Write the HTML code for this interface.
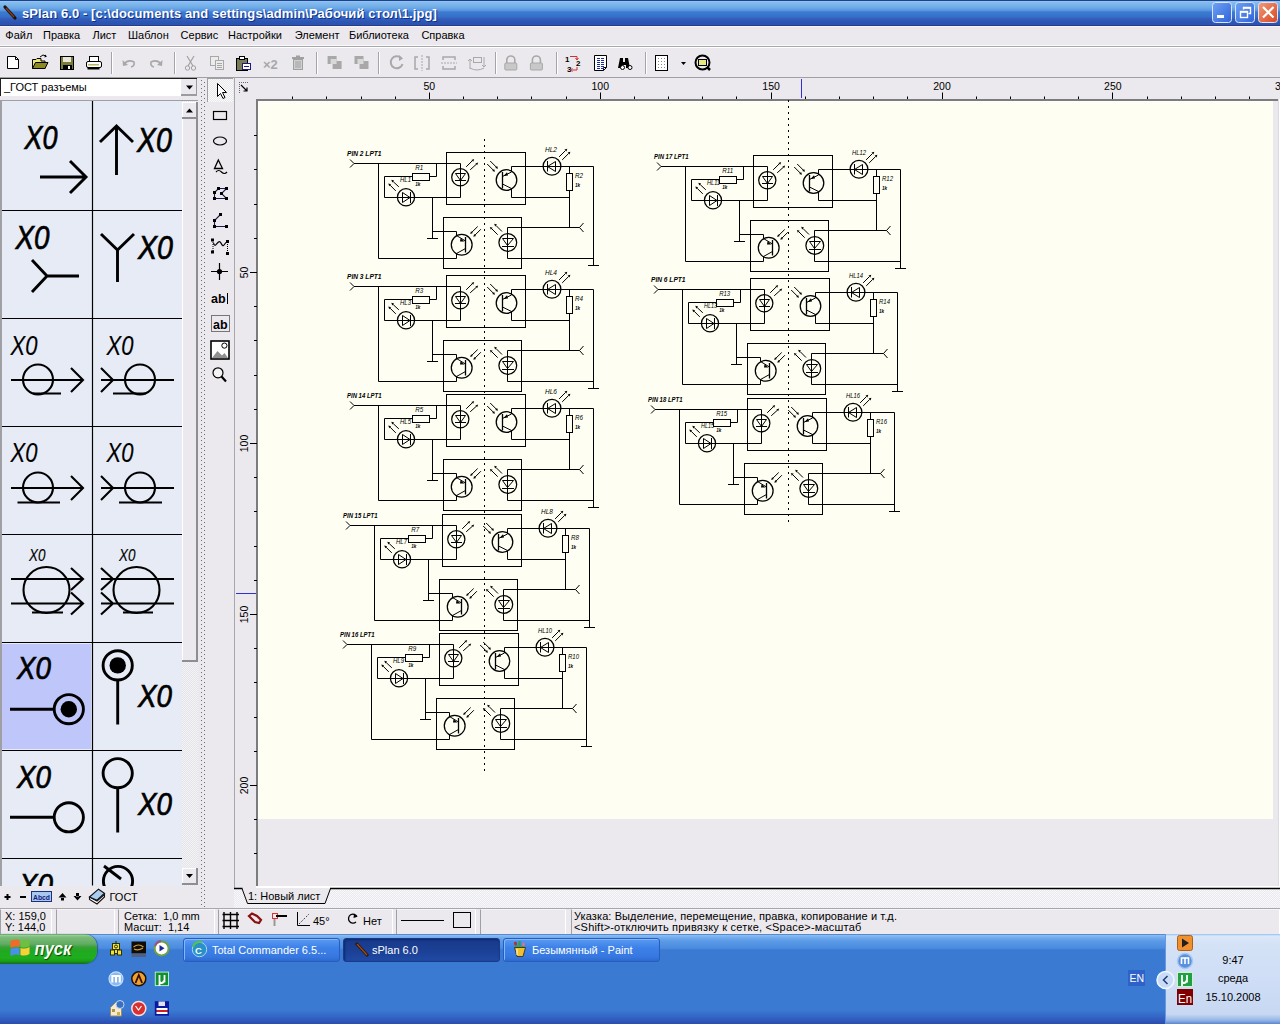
<!DOCTYPE html><html><head><meta charset="utf-8"><title>sPlan</title><style>
*{box-sizing:border-box}
html,body{margin:0;padding:0}
body{width:1280px;height:1024px;overflow:hidden;position:relative;background:#ebe9ed;font-family:"Liberation Sans",sans-serif;font-size:11px;color:#000}
.a{position:absolute}
.t{position:absolute;white-space:nowrap;line-height:1}
svg{position:absolute;overflow:visible}
</style></head><body><div class="a" style="left:0;top:0;width:1280px;height:26px;background:linear-gradient(180deg,#1a448a 0px,#1a448a 1px,#a0c8ff 1px,#88bcf0 2px,#7ab4e8 5px,#6aa8e8 8px,#5590e0 11px,#3a78cc 12px,#3a7ad0 13px,#3470c8 17px,#3a60c0 18px,#2c58b4 21px,#2a52b0 25px,#283a88 25px,#283a88 26px)"></div><svg style="left:0;top:0" width="26" height="26"><line x1="5" y1="7" x2="15" y2="18" stroke="#1b1208" stroke-width="3.2" stroke-linecap="round"/><line x1="6" y1="8" x2="14" y2="17" stroke="#8a3c18" stroke-width="1.4"/></svg><div class="t" style="left:22px;top:6.5px;font-size:13px;font-weight:bold;color:#fff;letter-spacing:0.1px;text-shadow:1px 1px 0 #0f2f8a">sPlan 6.0 - [c:\documents and settings\admin\Рабочий стол\1.jpg]</div><svg style="left:1211.5px;top:2px" width="21" height="21"><defs><linearGradient id="g1211" x1="0" y1="0" x2="1" y2="1"><stop offset="0" stop-color="#6ea2f4"/><stop offset="1" stop-color="#2f62d8"/></linearGradient></defs><rect x="0.5" y="0.5" width="19" height="20" rx="3" ry="3" fill="url(#g1211)" stroke="#d8e4fa" stroke-width="1"/><rect x="5" y="13" width="7" height="3" fill="#fff"/></svg><svg style="left:1234.5px;top:2px" width="21" height="21"><defs><linearGradient id="g1234" x1="0" y1="0" x2="1" y2="1"><stop offset="0" stop-color="#6ea2f4"/><stop offset="1" stop-color="#2f62d8"/></linearGradient></defs><rect x="0.5" y="0.5" width="19" height="20" rx="3" ry="3" fill="url(#g1234)" stroke="#d8e4fa" stroke-width="1"/><rect x="5.5" y="9.5" width="7" height="6" fill="none" stroke="#fff" stroke-width="1.4"/><rect x="5" y="9" width="8" height="1.8" fill="#fff"/><path d="M8.5 7.5 V5.5 H15.5 V11.5 H13.5" fill="none" stroke="#fff" stroke-width="1.4"/><rect x="8" y="5" width="8" height="1.8" fill="#fff"/></svg><svg style="left:1257.5px;top:2px" width="21" height="21"><defs><linearGradient id="g1257" x1="0" y1="0" x2="1" y2="1"><stop offset="0" stop-color="#f29b7b"/><stop offset="1" stop-color="#d8451e"/></linearGradient></defs><rect x="0.5" y="0.5" width="19" height="20" rx="3" ry="3" fill="url(#g1257)" stroke="#d8e4fa" stroke-width="1"/><path d="M5 5 L15.5 15.5 M15.5 5 L5 15.5" stroke="#fff" stroke-width="2.2"/></svg><div class="a" style="left:0;top:26px;width:1280px;height:20px;background:#ebe9ed"></div><div class="a" style="left:0;top:26px;width:1280px;height:4px;background:linear-gradient(180deg,#f6f6fa 0,#f6f6fa 1px,#f1e9ee 1px,#f0e2f0 3px,#e8ece8 3px,#e8ece8 4px)"></div><div class="a" style="left:0;top:45px;width:1280px;height:1px;background:#fafafc"></div><div class="a" style="left:0;top:46px;width:1280px;height:1px;background:#a8a7ab"></div><div class="a" style="left:0;top:47px;width:1280px;height:1px;background:#fff"></div><div class="t" style="left:5.3px;top:29.9px;font-size:11px">Файл</div><div class="t" style="left:43px;top:29.9px;font-size:11px">Правка</div><div class="t" style="left:92.5px;top:29.9px;font-size:11px">Лист</div><div class="t" style="left:128px;top:29.9px;font-size:11px">Шаблон</div><div class="t" style="left:180.6px;top:29.9px;font-size:11px">Сервис</div><div class="t" style="left:228px;top:29.9px;font-size:11px">Настройки</div><div class="t" style="left:294.7px;top:29.9px;font-size:11px">Элемент</div><div class="t" style="left:349px;top:29.9px;font-size:11px">Библиотека</div><div class="t" style="left:421.4px;top:29.9px;font-size:11px">Справка</div><div class="a" style="left:0;top:48px;width:1280px;height:29px;background:#ebe9ed"></div><div class="a" style="left:0;top:77px;width:1280px;height:1px;background:#a0a0a4"></div><div class="a" style="left:111px;top:52px;width:1px;height:22px;background:#a4a4a8"></div><div class="a" style="left:112px;top:52px;width:1px;height:22px;background:#fff"></div><div class="a" style="left:174px;top:52px;width:1px;height:22px;background:#a4a4a8"></div><div class="a" style="left:175px;top:52px;width:1px;height:22px;background:#fff"></div><div class="a" style="left:316px;top:52px;width:1px;height:22px;background:#a4a4a8"></div><div class="a" style="left:317px;top:52px;width:1px;height:22px;background:#fff"></div><div class="a" style="left:378px;top:52px;width:1px;height:22px;background:#a4a4a8"></div><div class="a" style="left:379px;top:52px;width:1px;height:22px;background:#fff"></div><div class="a" style="left:495px;top:52px;width:1px;height:22px;background:#a4a4a8"></div><div class="a" style="left:496px;top:52px;width:1px;height:22px;background:#fff"></div><div class="a" style="left:556px;top:52px;width:1px;height:22px;background:#a4a4a8"></div><div class="a" style="left:557px;top:52px;width:1px;height:22px;background:#fff"></div><div class="a" style="left:645px;top:52px;width:1px;height:22px;background:#a4a4a8"></div><div class="a" style="left:646px;top:52px;width:1px;height:22px;background:#fff"></div><svg style="left:0;top:0" width="1280" height="80"><path d="M7.5 56.5 H15.5 L18.5 59.5 V68.5 H7.5 Z" fill="#fff" stroke="#000"/><path d="M15.5 56.5 V59.5 H18.5" fill="none" stroke="#000"/><path d="M32.5 59.5 H36 L37 58.5 H41 V61 H45 V68.5 H32.5 Z" fill="#e9e57a" stroke="#000"/><path d="M32.5 68.5 L35.5 62.5 H48 L45 68.5 Z" fill="#8a8a20" stroke="#000"/><path d="M40 57 Q43 53.5 46 56" fill="none" stroke="#000"/><path d="M45 54.5 L47 56.5 L44.5 57.5Z" fill="#000"/><rect x="60.5" y="56.5" width="13" height="13" fill="#7c7c3a" stroke="#000"/><rect x="63" y="57" width="8" height="5" fill="#e8e8d8"/><rect x="63" y="65" width="9" height="4.5" fill="#000"/><rect x="68" y="66" width="2" height="3" fill="#fff"/><rect x="89.5" y="56.5" width="9" height="5" fill="#fff" stroke="#000"/><rect x="86.5" y="61.5" width="15" height="6" rx="1.5" fill="#fff" stroke="#000"/><rect x="88" y="64" width="11" height="1.5" fill="#b8b860"/><rect x="87.5" y="67.5" width="12" height="2" fill="#000"/><path d="M124 64 Q128 59 134 62 Q135 66 131 67" fill="none" stroke="#a8a8a8" stroke-width="1.6"/><path d="M122.5 60 L123 66 L128 65Z" fill="#a8a8a8"/><path d="M161 64 Q157 59 151 62 Q150 66 154 67" fill="none" stroke="#a8a8a8" stroke-width="1.6"/><path d="M162.5 60 L162 66 L157 65Z" fill="#a8a8a8"/><path d="M187 56 L193 66 M194 56 L188 66" stroke="#a0a0a0" stroke-width="1.2" fill="none"/><circle cx="187.5" cy="68" r="2.2" fill="none" stroke="#a0a0a0"/><circle cx="193.5" cy="68" r="2.2" fill="none" stroke="#a0a0a0"/><rect x="210.5" y="56.5" width="8" height="9" fill="#ececec" stroke="#a8a8a8"/><rect x="215.5" y="60.5" width="8" height="9" fill="#ececec" stroke="#a8a8a8"/><path d="M217 63.5h5M217 65.5h5M217 67.5h5" stroke="#a8a8a8"/><rect x="236.5" y="58.5" width="11" height="12" fill="#7a7a58" stroke="#000"/><rect x="239.5" y="56.5" width="5" height="3" fill="#fff" stroke="#000"/><rect x="242.5" y="63.5" width="8" height="6" fill="#fff" stroke="#1a1a80"/><path d="M244 66.5h5" stroke="#1a1a80"/><text x="263" y="69" font-family="Liberation Sans" font-size="13" font-weight="bold" fill="#a8a8a8">×2</text><rect x="293.5" y="59.5" width="9" height="10" fill="#d0d0d0" stroke="#a0a0a0"/><rect x="292" y="57" width="12" height="2" fill="#a0a0a0"/><rect x="296" y="55.5" width="4" height="2" fill="#a0a0a0"/><path d="M296 61v7M298 61v7M300 61v7" stroke="#a0a0a0"/><rect x="327.6" y="56" width="9" height="8" fill="#a8a8a8"/><rect x="332.6" y="61" width="9" height="8" fill="#a8a8a8"/><rect x="330.6" y="59" width="6" height="5" fill="#d8d8d8"/><rect x="354.5" y="56" width="9" height="8" fill="#a8a8a8"/><rect x="359.5" y="61" width="9" height="8" fill="#a8a8a8"/><rect x="357.5" y="59" width="6" height="5" fill="#d8d8d8"/><path d="M401 58 A6 6 0 1 0 402.5 64" fill="none" stroke="#a8a8a8" stroke-width="2"/><path d="M399 55 L403 58.5 L399 61Z" fill="#a8a8a8"/><path d="M418 57h-3v12h3M426 57h3v12h-3" fill="none" stroke="#a8a8a8" stroke-width="1.5"/><path d="M422 55v16" stroke="#a8a8a8" stroke-dasharray="2 1"/><path d="M443 60v-3h12v3M443 66v3h12v-3" fill="none" stroke="#a8a8a8" stroke-width="1.5"/><path d="M441 63h16" stroke="#a8a8a8" stroke-dasharray="2 1"/><rect x="473.5" y="57.5" width="8" height="5" fill="none" stroke="#a8a8a8"/><path d="M470 69v-10l-2 2M470 59l2 2M484 57v10l-2-2M484 67l2-2M470 68q7 4 14 0" fill="none" stroke="#a8a8a8"/><path d="M506.8 63v-3a4 4 0 0 1 8 0v3" fill="none" stroke="#a8a8a8" stroke-width="1.6"/><rect x="504.8" y="63" width="12" height="7" rx="1" fill="#c8c8c8" stroke="#a8a8a8"/><path d="M532.4 63v-3a4 4 0 0 1 8 0v3" fill="none" stroke="#a8a8a8" stroke-width="1.6"/><rect x="530.4" y="63" width="12" height="7" rx="1" fill="#c8c8c8" stroke="#a8a8a8"/><text x="565" y="62" font-family="Liberation Sans" font-size="8" font-weight="bold">1</text><text x="576" y="66" font-family="Liberation Sans" font-size="8" font-weight="bold">2</text><text x="567" y="72" font-family="Liberation Sans" font-size="8" font-weight="bold">3</text><path d="M570 56.5h7v3M577 67v3h-5" fill="none" stroke="#d03030"/><path d="M575.5 58l1.5 2 1.5-2M572.5 68.5l-2 1.5 2 1.5" fill="none" stroke="#d03030"/><path d="M594.5 55.5h12v12l-3 3h-9z" fill="#fff" stroke="#000"/><path d="M606.5 67.5h-3v3" fill="none" stroke="#000"/><path d="M597 58.5h3M601 58.5h3M597 60.5h3M601 60.5h3M597 62.5h3M601 62.5h3M597 64.5h3M601 64.5h3M597 66.5h3M601 66.5h3M597 68.5h3M601 68.5h3" stroke="#1a2aa0"/><path d="M620 58h3v4h2v-4h3l2 10h-4v-3h-4v3h-4z" fill="#000"/><circle cx="622.5" cy="67.5" r="2" fill="#fff" stroke="#000"/><circle cx="630" cy="67.5" r="2" fill="#fff" stroke="#000"/><rect x="655.5" y="55.5" width="12" height="15" fill="#fff" stroke="#000"/><rect x="658" y="58" width="1" height="1" fill="#888"/><rect x="658" y="61" width="1" height="1" fill="#888"/><rect x="658" y="64" width="1" height="1" fill="#888"/><rect x="658" y="67" width="1" height="1" fill="#888"/><rect x="661" y="58" width="1" height="1" fill="#888"/><rect x="661" y="61" width="1" height="1" fill="#888"/><rect x="661" y="64" width="1" height="1" fill="#888"/><rect x="661" y="67" width="1" height="1" fill="#888"/><rect x="664" y="58" width="1" height="1" fill="#888"/><rect x="664" y="61" width="1" height="1" fill="#888"/><rect x="664" y="64" width="1" height="1" fill="#888"/><rect x="664" y="67" width="1" height="1" fill="#888"/><path d="M681 62h5l-2.5 3z" fill="#000"/><circle cx="702.5" cy="62.5" r="7" fill="none" stroke="#000" stroke-width="2"/><rect x="698.5" y="59.5" width="8" height="6" fill="#e8e880" stroke="#000"/><path d="M707 67l3 3" stroke="#000" stroke-width="2.5"/></svg><div class="a" style="left:0;top:78px;width:197px;height:18px;background:#fff;border-top:1px solid #1e1e1e;border-left:1px solid #1e1e1e"></div><div class="a" style="left:181px;top:79px;width:16px;height:17px;background:#ebe9ed;border-right:1px solid #9c9ca0;border-bottom:2px solid #9c9ca0"></div><svg style="left:0;top:0" width="200" height="120"><path d="M186 85.5h7l-3.5 4z" fill="#000"/></svg><div class="t" style="left:4px;top:82px;font-size:11px">_ГОСТ разъемы</div><div class="a" style="left:0;top:100px;width:198px;height:786px;background:#e6ebf5;border-top:1px solid #a0a0a4;border-left:2px solid #a0a0a4;overflow:hidden"><svg style="left:-2px;top:-101px" width="200" height="1000"><path d="M92.5 101V885.5M0 210.5H182M0 318.5H182M0 426.5H182M0 534.5H182M0 642.5H182M0 750.5H182M0 858.5H182" stroke="#000" stroke-width="1.2" fill="none"/><rect x="2" y="644" width="89" height="105" fill="#bec6fa"/><text x="24.5" y="149" font-family="Liberation Sans" font-style="italic" font-size="33.4" textLength="33" lengthAdjust="spacingAndGlyphs" fill="#000" stroke="#000" stroke-width="0.7">X0</text><path d="M40 177H86M70 161L86 177L70 193" stroke="#000" stroke-width="2.9" fill="none" stroke-linecap="butt"/><path d="M116.5 175V126M100 142L116.5 126L133 142" stroke="#000" stroke-width="2.9" fill="none" stroke-linecap="butt"/><text x="137" y="152" font-family="Liberation Sans" font-style="italic" font-size="34.9" textLength="35" lengthAdjust="spacingAndGlyphs" fill="#000" stroke="#000" stroke-width="0.7">X0</text><text x="15.5" y="249" font-family="Liberation Sans" font-style="italic" font-size="33.4" textLength="34" lengthAdjust="spacingAndGlyphs" fill="#000" stroke="#000" stroke-width="0.7">X0</text><path d="M32 260L47 276L32 292M47 276H79" stroke="#000" stroke-width="2.9" fill="none" stroke-linecap="butt"/><path d="M101 234L117.5 250L134 234M117.5 250V282" stroke="#000" stroke-width="2.9" fill="none" stroke-linecap="butt"/><text x="138" y="259" font-family="Liberation Sans" font-style="italic" font-size="33.4" textLength="35" lengthAdjust="spacingAndGlyphs" fill="#000" stroke="#000" stroke-width="0.7">X0</text><text x="10.5" y="354.6" font-family="Liberation Sans" font-style="italic" font-size="27.0" textLength="27" lengthAdjust="spacingAndGlyphs" fill="#000" stroke="#000" stroke-width="0.15">X0</text><circle cx="38" cy="379.5" r="15" stroke="#000" stroke-width="2.1" fill="none"/><path d="M11 380H83M71 368L83 380L71 392M33 393.5H61" stroke="#000" stroke-width="2.1" fill="none"/><text x="106.5" y="354.6" font-family="Liberation Sans" font-style="italic" font-size="27.0" textLength="27" lengthAdjust="spacingAndGlyphs" fill="#000" stroke="#000" stroke-width="0.15">X0</text><circle cx="140" cy="379.5" r="15" stroke="#000" stroke-width="2.1" fill="none"/><path d="M101 380H174M101 368L113 380L101 392M113 393.5H146" stroke="#000" stroke-width="2.1" fill="none"/><text x="10.5" y="462" font-family="Liberation Sans" font-style="italic" font-size="27.0" textLength="27" lengthAdjust="spacingAndGlyphs" fill="#000" stroke="#000" stroke-width="0.15">X0</text><circle cx="38" cy="487.5" r="15" stroke="#000" stroke-width="2.1" fill="none"/><path d="M11 488H83M71 476L83 488L71 500M17.5 502.5H60" stroke="#000" stroke-width="2.1" fill="none"/><text x="106.5" y="462" font-family="Liberation Sans" font-style="italic" font-size="27.0" textLength="27" lengthAdjust="spacingAndGlyphs" fill="#000" stroke="#000" stroke-width="0.15">X0</text><circle cx="140" cy="487.5" r="15" stroke="#000" stroke-width="2.1" fill="none"/><path d="M101 488H174M101 476L113 488L101 500M119 502.5H162" stroke="#000" stroke-width="2.1" fill="none"/><text x="29" y="560.5" font-family="Liberation Sans" font-style="italic" font-size="16.7" textLength="16.5" lengthAdjust="spacingAndGlyphs" fill="#000" stroke="#000" stroke-width="0.15">X0</text><circle cx="46.5" cy="590" r="23" stroke="#000" stroke-width="2.1" fill="none"/><path d="M11 579H83M71 568L83 579L71 590M11 603.5H83M71 592.5L83 603.5L71 614.5M32 612.5H63" stroke="#000" stroke-width="2.1" fill="none"/><text x="119" y="560.5" font-family="Liberation Sans" font-style="italic" font-size="16.7" textLength="16.5" lengthAdjust="spacingAndGlyphs" fill="#000" stroke="#000" stroke-width="0.15">X0</text><circle cx="136.5" cy="590" r="23" stroke="#000" stroke-width="2.1" fill="none"/><path d="M101 579H174M101 568L113 579L101 590M101 603.5H174M101 592.5L113 603.5L101 614.5M123 612.5H153" stroke="#000" stroke-width="2.1" fill="none"/><text x="17" y="679.3" font-family="Liberation Sans" font-style="italic" font-size="32.0" textLength="34" lengthAdjust="spacingAndGlyphs" fill="#000" stroke="#000" stroke-width="0.7">X0</text><path d="M10 709.2H54" stroke="#000" stroke-width="2.9" fill="none" stroke-linecap="butt"/><circle cx="68.8" cy="709.2" r="14.6" stroke="#000" stroke-width="2.9" fill="none" stroke-linecap="butt"/><circle cx="68.8" cy="709.2" r="8.2" fill="#000"/><circle cx="117.7" cy="665.4" r="14.6" stroke="#000" stroke-width="2.9" fill="none" stroke-linecap="butt"/><circle cx="117.7" cy="665.4" r="8.2" fill="#000"/><path d="M117.7 680V724.5" stroke="#000" stroke-width="2.9" fill="none" stroke-linecap="butt"/><text x="138" y="707" font-family="Liberation Sans" font-style="italic" font-size="32.0" textLength="34" lengthAdjust="spacingAndGlyphs" fill="#000" stroke="#000" stroke-width="0.7">X0</text><text x="17" y="787.8" font-family="Liberation Sans" font-style="italic" font-size="32.0" textLength="34" lengthAdjust="spacingAndGlyphs" fill="#000" stroke="#000" stroke-width="0.7">X0</text><path d="M10 817.3H54" stroke="#000" stroke-width="2.9" fill="none" stroke-linecap="butt"/><circle cx="68.8" cy="817.3" r="14.6" stroke="#000" stroke-width="2.9" fill="none" stroke-linecap="butt"/><circle cx="117.7" cy="773.2" r="14.6" stroke="#000" stroke-width="2.9" fill="none" stroke-linecap="butt"/><path d="M117.7 788V832.5" stroke="#000" stroke-width="2.9" fill="none" stroke-linecap="butt"/><text x="138" y="815" font-family="Liberation Sans" font-style="italic" font-size="32.0" textLength="34" lengthAdjust="spacingAndGlyphs" fill="#000" stroke="#000" stroke-width="0.7">X0</text><text x="19" y="896" font-family="Liberation Sans" font-style="italic" font-size="32.0" textLength="34" lengthAdjust="spacingAndGlyphs" fill="#000" stroke="#000" stroke-width="0.7">X0</text><circle cx="118" cy="881" r="14.6" stroke="#000" stroke-width="2.9" fill="none" stroke-linecap="butt"/><path d="M104 866L121 879" stroke="#000" stroke-width="2.9" fill="none" stroke-linecap="butt"/></svg></div><div class="a" style="left:182px;top:101px;width:16px;height:785px;background:repeating-conic-gradient(#f4f3f6 0 25%,#e4e3e8 0 50%) 0 0/2px 2px"></div><div class="a" style="left:182px;top:118px;width:16px;height:544px;background:#ebe9ed;border-right:2px solid #8e8e92;border-bottom:2px solid #8e8e92;box-shadow:inset 1px 1px 0 #fff"></div><div class="a" style="left:182px;top:102px;width:16px;height:17px;background:#ebe9ed;border-right:2px solid #8e8e92;border-bottom:2px solid #8e8e92;box-shadow:inset 1px 1px 0 #fff"></div><div class="a" style="left:182px;top:868px;width:16px;height:17px;background:#ebe9ed;border-right:2px solid #8e8e92;border-bottom:2px solid #8e8e92;box-shadow:inset 1px 1px 0 #fff"></div><svg style="left:0;top:0" width="200" height="1000"><path d="M186 112.5h7l-3.5-4z" fill="#000"/><path d="M186 874h7l-3.5 4z" fill="#000"/></svg><svg style="left:0;top:0" width="200" height="1000"><path d="M4.5 897h6M7.5 894v6" stroke="#000" stroke-width="2"/><path d="M20 897h6" stroke="#000" stroke-width="2"/><rect x="31.5" y="891.5" width="20" height="10" fill="#a8c8f0" stroke="#1a3080"/><text x="33" y="899.5" font-family="Liberation Sans" font-weight="bold" font-size="8" textLength="17" lengthAdjust="spacingAndGlyphs" fill="#10207a">Abcd</text><path d="M58.5 897.5l4-4.5 4 4.5zM61 897v3.5h3v-3.5" fill="#000"/><path d="M73.5 896l4 4.5 4-4.5zM76 896.5v-3.5h3v3.5" fill="#000"/><path d="M89.5 897v2.5l7.5 4.5 7.5-7v-2.5l-7.5 6.5z" fill="#fff" stroke="#111" stroke-width="1.1"/><path d="M89.5 897l9-7.8 6 4-7.5 7z" fill="#a8cdf0" stroke="#111" stroke-width="1.1"/></svg><div class="t" style="left:109.5px;top:892px;font-size:11px">ГОСТ</div><svg style="left:0;top:0" width="240" height="1000"><path d="M201 80h1v1h-1zM204 82h1v1h-1zM201 84h1v1h-1zM204 86h1v1h-1zM201 88h1v1h-1zM204 90h1v1h-1zM201 92h1v1h-1zM204 94h1v1h-1zM201 96h1v1h-1zM204 98h1v1h-1zM201 100h1v1h-1zM204 102h1v1h-1zM201 104h1v1h-1zM204 106h1v1h-1zM201 108h1v1h-1zM204 110h1v1h-1zM201 112h1v1h-1zM204 114h1v1h-1zM201 116h1v1h-1zM204 118h1v1h-1zM201 120h1v1h-1zM204 122h1v1h-1zM201 124h1v1h-1zM204 126h1v1h-1zM201 128h1v1h-1zM204 130h1v1h-1zM201 132h1v1h-1zM204 134h1v1h-1zM201 136h1v1h-1zM204 138h1v1h-1zM201 140h1v1h-1zM204 142h1v1h-1zM201 144h1v1h-1zM204 146h1v1h-1zM201 148h1v1h-1zM204 150h1v1h-1zM201 152h1v1h-1zM204 154h1v1h-1zM201 156h1v1h-1zM204 158h1v1h-1zM201 160h1v1h-1zM204 162h1v1h-1zM201 164h1v1h-1zM204 166h1v1h-1zM201 168h1v1h-1zM204 170h1v1h-1zM201 172h1v1h-1zM204 174h1v1h-1zM201 176h1v1h-1zM204 178h1v1h-1zM201 180h1v1h-1zM204 182h1v1h-1zM201 184h1v1h-1zM204 186h1v1h-1zM201 188h1v1h-1zM204 190h1v1h-1zM201 192h1v1h-1zM204 194h1v1h-1zM201 196h1v1h-1zM204 198h1v1h-1zM201 200h1v1h-1zM204 202h1v1h-1zM201 204h1v1h-1zM204 206h1v1h-1zM201 208h1v1h-1zM204 210h1v1h-1zM201 212h1v1h-1zM204 214h1v1h-1zM201 216h1v1h-1zM204 218h1v1h-1zM201 220h1v1h-1zM204 222h1v1h-1zM201 224h1v1h-1zM204 226h1v1h-1zM201 228h1v1h-1zM204 230h1v1h-1zM201 232h1v1h-1zM204 234h1v1h-1zM201 236h1v1h-1zM204 238h1v1h-1zM201 240h1v1h-1zM204 242h1v1h-1zM201 244h1v1h-1zM204 246h1v1h-1zM201 248h1v1h-1zM204 250h1v1h-1zM201 252h1v1h-1zM204 254h1v1h-1zM201 256h1v1h-1zM204 258h1v1h-1zM201 260h1v1h-1zM204 262h1v1h-1zM201 264h1v1h-1zM204 266h1v1h-1zM201 268h1v1h-1zM204 270h1v1h-1zM201 272h1v1h-1zM204 274h1v1h-1zM201 276h1v1h-1zM204 278h1v1h-1zM201 280h1v1h-1zM204 282h1v1h-1zM201 284h1v1h-1zM204 286h1v1h-1zM201 288h1v1h-1zM204 290h1v1h-1zM201 292h1v1h-1zM204 294h1v1h-1zM201 296h1v1h-1zM204 298h1v1h-1zM201 300h1v1h-1zM204 302h1v1h-1zM201 304h1v1h-1zM204 306h1v1h-1zM201 308h1v1h-1zM204 310h1v1h-1zM201 312h1v1h-1zM204 314h1v1h-1zM201 316h1v1h-1zM204 318h1v1h-1zM201 320h1v1h-1zM204 322h1v1h-1zM201 324h1v1h-1zM204 326h1v1h-1zM201 328h1v1h-1zM204 330h1v1h-1zM201 332h1v1h-1zM204 334h1v1h-1zM201 336h1v1h-1zM204 338h1v1h-1zM201 340h1v1h-1zM204 342h1v1h-1zM201 344h1v1h-1zM204 346h1v1h-1zM201 348h1v1h-1zM204 350h1v1h-1zM201 352h1v1h-1zM204 354h1v1h-1zM201 356h1v1h-1zM204 358h1v1h-1zM201 360h1v1h-1zM204 362h1v1h-1zM201 364h1v1h-1zM204 366h1v1h-1zM201 368h1v1h-1zM204 370h1v1h-1zM201 372h1v1h-1zM204 374h1v1h-1zM201 376h1v1h-1zM204 378h1v1h-1zM201 380h1v1h-1zM204 382h1v1h-1zM201 384h1v1h-1zM204 386h1v1h-1zM201 388h1v1h-1zM204 390h1v1h-1zM201 392h1v1h-1zM204 394h1v1h-1zM201 396h1v1h-1zM204 398h1v1h-1zM201 400h1v1h-1zM204 402h1v1h-1zM201 404h1v1h-1zM204 406h1v1h-1zM201 408h1v1h-1zM204 410h1v1h-1zM201 412h1v1h-1zM204 414h1v1h-1zM201 416h1v1h-1zM204 418h1v1h-1zM201 420h1v1h-1zM204 422h1v1h-1zM201 424h1v1h-1zM204 426h1v1h-1zM201 428h1v1h-1zM204 430h1v1h-1zM201 432h1v1h-1zM204 434h1v1h-1zM201 436h1v1h-1zM204 438h1v1h-1zM201 440h1v1h-1zM204 442h1v1h-1zM201 444h1v1h-1zM204 446h1v1h-1zM201 448h1v1h-1zM204 450h1v1h-1zM201 452h1v1h-1zM204 454h1v1h-1zM201 456h1v1h-1zM204 458h1v1h-1zM201 460h1v1h-1zM204 462h1v1h-1zM201 464h1v1h-1zM204 466h1v1h-1zM201 468h1v1h-1zM204 470h1v1h-1zM201 472h1v1h-1zM204 474h1v1h-1zM201 476h1v1h-1zM204 478h1v1h-1zM201 480h1v1h-1zM204 482h1v1h-1zM201 484h1v1h-1zM204 486h1v1h-1zM201 488h1v1h-1zM204 490h1v1h-1zM201 492h1v1h-1zM204 494h1v1h-1zM201 496h1v1h-1zM204 498h1v1h-1zM201 500h1v1h-1zM204 502h1v1h-1zM201 504h1v1h-1zM204 506h1v1h-1zM201 508h1v1h-1zM204 510h1v1h-1zM201 512h1v1h-1zM204 514h1v1h-1zM201 516h1v1h-1zM204 518h1v1h-1zM201 520h1v1h-1zM204 522h1v1h-1zM201 524h1v1h-1zM204 526h1v1h-1zM201 528h1v1h-1zM204 530h1v1h-1zM201 532h1v1h-1zM204 534h1v1h-1zM201 536h1v1h-1zM204 538h1v1h-1zM201 540h1v1h-1zM204 542h1v1h-1zM201 544h1v1h-1zM204 546h1v1h-1zM201 548h1v1h-1zM204 550h1v1h-1zM201 552h1v1h-1zM204 554h1v1h-1zM201 556h1v1h-1zM204 558h1v1h-1zM201 560h1v1h-1zM204 562h1v1h-1zM201 564h1v1h-1zM204 566h1v1h-1zM201 568h1v1h-1zM204 570h1v1h-1zM201 572h1v1h-1zM204 574h1v1h-1zM201 576h1v1h-1zM204 578h1v1h-1zM201 580h1v1h-1zM204 582h1v1h-1zM201 584h1v1h-1zM204 586h1v1h-1zM201 588h1v1h-1zM204 590h1v1h-1zM201 592h1v1h-1zM204 594h1v1h-1zM201 596h1v1h-1zM204 598h1v1h-1zM201 600h1v1h-1zM204 602h1v1h-1zM201 604h1v1h-1zM204 606h1v1h-1zM201 608h1v1h-1zM204 610h1v1h-1zM201 612h1v1h-1zM204 614h1v1h-1zM201 616h1v1h-1zM204 618h1v1h-1zM201 620h1v1h-1zM204 622h1v1h-1zM201 624h1v1h-1zM204 626h1v1h-1zM201 628h1v1h-1zM204 630h1v1h-1zM201 632h1v1h-1zM204 634h1v1h-1zM201 636h1v1h-1zM204 638h1v1h-1zM201 640h1v1h-1zM204 642h1v1h-1zM201 644h1v1h-1zM204 646h1v1h-1zM201 648h1v1h-1zM204 650h1v1h-1zM201 652h1v1h-1zM204 654h1v1h-1zM201 656h1v1h-1zM204 658h1v1h-1zM201 660h1v1h-1zM204 662h1v1h-1zM201 664h1v1h-1zM204 666h1v1h-1zM201 668h1v1h-1zM204 670h1v1h-1zM201 672h1v1h-1zM204 674h1v1h-1zM201 676h1v1h-1zM204 678h1v1h-1zM201 680h1v1h-1zM204 682h1v1h-1zM201 684h1v1h-1zM204 686h1v1h-1zM201 688h1v1h-1zM204 690h1v1h-1zM201 692h1v1h-1zM204 694h1v1h-1zM201 696h1v1h-1zM204 698h1v1h-1zM201 700h1v1h-1zM204 702h1v1h-1zM201 704h1v1h-1zM204 706h1v1h-1zM201 708h1v1h-1zM204 710h1v1h-1zM201 712h1v1h-1zM204 714h1v1h-1zM201 716h1v1h-1zM204 718h1v1h-1zM201 720h1v1h-1zM204 722h1v1h-1zM201 724h1v1h-1zM204 726h1v1h-1zM201 728h1v1h-1zM204 730h1v1h-1zM201 732h1v1h-1zM204 734h1v1h-1zM201 736h1v1h-1zM204 738h1v1h-1zM201 740h1v1h-1zM204 742h1v1h-1zM201 744h1v1h-1zM204 746h1v1h-1zM201 748h1v1h-1zM204 750h1v1h-1zM201 752h1v1h-1zM204 754h1v1h-1zM201 756h1v1h-1zM204 758h1v1h-1zM201 760h1v1h-1zM204 762h1v1h-1zM201 764h1v1h-1zM204 766h1v1h-1zM201 768h1v1h-1zM204 770h1v1h-1zM201 772h1v1h-1zM204 774h1v1h-1zM201 776h1v1h-1zM204 778h1v1h-1zM201 780h1v1h-1zM204 782h1v1h-1zM201 784h1v1h-1zM204 786h1v1h-1zM201 788h1v1h-1zM204 790h1v1h-1zM201 792h1v1h-1zM204 794h1v1h-1zM201 796h1v1h-1zM204 798h1v1h-1zM201 800h1v1h-1zM204 802h1v1h-1zM201 804h1v1h-1zM204 806h1v1h-1zM201 808h1v1h-1zM204 810h1v1h-1zM201 812h1v1h-1zM204 814h1v1h-1zM201 816h1v1h-1zM204 818h1v1h-1zM201 820h1v1h-1zM204 822h1v1h-1zM201 824h1v1h-1zM204 826h1v1h-1zM201 828h1v1h-1zM204 830h1v1h-1zM201 832h1v1h-1zM204 834h1v1h-1zM201 836h1v1h-1zM204 838h1v1h-1zM201 840h1v1h-1zM204 842h1v1h-1zM201 844h1v1h-1zM204 846h1v1h-1zM201 848h1v1h-1zM204 850h1v1h-1zM201 852h1v1h-1zM204 854h1v1h-1zM201 856h1v1h-1zM204 858h1v1h-1zM201 860h1v1h-1zM204 862h1v1h-1zM201 864h1v1h-1zM204 866h1v1h-1zM201 868h1v1h-1zM204 870h1v1h-1zM201 872h1v1h-1zM204 874h1v1h-1zM201 876h1v1h-1zM204 878h1v1h-1zM201 880h1v1h-1zM204 882h1v1h-1zM201 884h1v1h-1zM204 886h1v1h-1zM201 888h1v1h-1zM204 890h1v1h-1zM201 892h1v1h-1zM204 894h1v1h-1zM201 896h1v1h-1zM204 898h1v1h-1zM201 900h1v1h-1zM204 902h1v1h-1zM201 904h1v1h-1zM204 906h1v1h-1z" fill="#6c6c70"/></svg><div class="a" style="left:234px;top:78px;width:1px;height:810px;background:#a8a8ac"></div><div class="a" style="left:207px;top:78px;width:26px;height:24px;background:repeating-conic-gradient(#fbfbfb 0 25%,#e8e8ea 0 50%) 0 0/2px 2px;border-left:1px solid #a0a0a4;border-top:1px solid #a0a0a4"></div><svg style="left:0;top:0" width="240" height="400"><path d="M217.5 83.5V96.5L220.5 93.5L223 98.5L225 97.5L222.5 92.5H226.5Z" fill="#fff" stroke="#000"/><rect x="213.5" y="111.5" width="13" height="8" fill="none" stroke="#000" stroke-width="1.2"/><ellipse cx="220" cy="141" rx="6.5" ry="4" fill="none" stroke="#000" stroke-width="1.2"/><path d="M214.5 168.5L218.3 160L222.5 168.5Z" fill="none" stroke="#000" stroke-width="1.3"/><path d="M216 172q2.5-3 5.5 0t5.5 0" fill="none" stroke="#000" stroke-width="1.2"/><path d="M214.5 192.5V198.5H226.5L221.5 193.5L226.5 188.5H218.5Z" fill="none" stroke="#1a1a50" stroke-width="1.1"/><rect x="217.0" y="187.0" width="3" height="3" fill="#000"/><rect x="225.0" y="187.0" width="3" height="3" fill="#000"/><rect x="220.0" y="192.0" width="3" height="3" fill="#000"/><rect x="225.0" y="197.0" width="3" height="3" fill="#000"/><rect x="213.0" y="197.0" width="3" height="3" fill="#000"/><rect x="213.0" y="191.0" width="3" height="3" fill="#000"/><path d="M220.5 214.5L214.5 220.5V226.5H226.5" fill="none" stroke="#1a1a50" stroke-width="1.1"/><rect x="219.0" y="213.0" width="3" height="3" fill="#000"/><rect x="213.0" y="219.0" width="3" height="3" fill="#000"/><rect x="213.0" y="225.0" width="3" height="3" fill="#000"/><rect x="225.0" y="225.0" width="3" height="3" fill="#000"/><path d="M213 251V240M227.5 242V253" stroke="#000" stroke-dasharray="1 1"/><path d="M213.5 243C215 248 216 244 218.5 242S222 248 224 245S226 242 227 242" fill="none" stroke="#000" stroke-width="1.2"/><rect x="211.0" y="238.5" width="3" height="3" fill="#000"/><rect x="211.0" y="250.5" width="3" height="3" fill="#000"/><rect x="226.0" y="240.0" width="3" height="3" fill="#000"/><rect x="226.0" y="252.0" width="3" height="3" fill="#000"/><path d="M211 271.5H228M219.5 263V280" stroke="#000" stroke-width="1.2"/><circle cx="219.5" cy="271.5" r="2.6" fill="#000"/><text x="211" y="303" font-family="Liberation Sans" font-weight="bold" font-size="12.5">ab</text><path d="M227.5 293V304" stroke="#000"/><rect x="211.5" y="315.5" width="18" height="16" fill="none" stroke="#000" stroke-dasharray="1 1"/><text x="213" y="328.5" font-family="Liberation Sans" font-weight="bold" font-size="12.5">ab</text><rect x="211" y="341" width="18" height="18" fill="#fff" stroke="#000" stroke-width="1.6"/><path d="M212 358L217.5 351L222 355.5L224.5 353L228 358Z" fill="#909090"/><circle cx="224.4" cy="345.6" r="2.6" fill="#fff" stroke="#000"/><circle cx="218" cy="372.8" r="5" fill="#f4f4f4" stroke="#000" stroke-width="1.2"/><path d="M221.5 376.5l4.5 5" stroke="#000" stroke-width="2.2"/></svg><div class="a" style="left:256px;top:99px;width:1022px;height:787px;background:#ebe9ed;border-left:2px solid #7c7c7c;border-top:2px solid #7c7c7c"></div><div class="a" style="left:258px;top:101px;width:1015px;height:718px;background:#fefff2;border-left:1px solid #fff;border-top:1px solid #fff"></div><div class="a" style="left:1278px;top:99px;width:1px;height:787px;background:#dcdbe0"></div><div class="a" style="left:256px;top:886px;width:1024px;height:2px;background:#fff"></div><div class="a" style="left:1279px;top:99px;width:1px;height:789px;background:#fff"></div><svg style="left:0;top:0" width="1280" height="1024"><path d="M292.5 96.5V99M326.5 96.5V99M361.5 96.5V99M395.5 96.5V99M429.5 92.5V99M463.5 96.5V99M497.5 96.5V99M531.5 96.5V99M566.5 96.5V99M600.5 92.5V99M634.5 96.5V99M668.5 96.5V99M702.5 96.5V99M736.5 96.5V99M771.5 92.5V99M805.5 96.5V99M839.5 96.5V99M873.5 96.5V99M907.5 96.5V99M942.5 92.5V99M976.5 96.5V99M1010.5 96.5V99M1044.5 96.5V99M1078.5 96.5V99M1112.5 92.5V99M1147.5 96.5V99M1181.5 96.5V99M1215.5 96.5V99M1249.5 96.5V99M1283.5 92.5V99" stroke="#000" stroke-width="1"/><text x="429.375" y="90" text-anchor="middle" font-family="Liberation Sans" font-size="10.5" fill="#000">50</text><text x="600.25" y="90" text-anchor="middle" font-family="Liberation Sans" font-size="10.5" fill="#000">100</text><text x="771.125" y="90" text-anchor="middle" font-family="Liberation Sans" font-size="10.5" fill="#000">150</text><text x="942.0" y="90" text-anchor="middle" font-family="Liberation Sans" font-size="10.5" fill="#000">200</text><text x="1112.875" y="90" text-anchor="middle" font-family="Liberation Sans" font-size="10.5" fill="#000">250</text><text x="1283.75" y="90" text-anchor="middle" font-family="Liberation Sans" font-size="10.5" fill="#000">300</text><path d="M254 135.5H257M254 169.5H257M254 204.5H257M254 238.5H257M250 272.5H257M254 306.5H257M254 340.5H257M254 375.5H257M254 409.5H257M250 443.5H257M254 477.5H257M254 511.5H257M254 546.5H257M254 580.5H257M250 614.5H257M254 648.5H257M254 682.5H257M254 717.5H257M254 751.5H257M250 785.5H257M254 819.5H257M254 853.5H257" stroke="#000" stroke-width="1"/><text x="0" y="0" transform="translate(247.5 272.5) rotate(-90)" text-anchor="middle" font-family="Liberation Sans" font-size="10.5" fill="#000">50</text><text x="0" y="0" transform="translate(247.5 443.5) rotate(-90)" text-anchor="middle" font-family="Liberation Sans" font-size="10.5" fill="#000">100</text><text x="0" y="0" transform="translate(247.5 614.5) rotate(-90)" text-anchor="middle" font-family="Liberation Sans" font-size="10.5" fill="#000">150</text><text x="0" y="0" transform="translate(247.5 785.5) rotate(-90)" text-anchor="middle" font-family="Liberation Sans" font-size="10.5" fill="#000">200</text><path d="M801.5 79V98M236 593.5H256" stroke="#3030d0" stroke-width="1"/><path d="M239 82.5h9M239.5 82v12" stroke="#666" stroke-dasharray="1 1"/><path d="M241 85l6 6M247 87.5v3.5h-3.5" stroke="#000" stroke-width="1.2" fill="none"/></svg><svg style="left:0;top:0" width="1280" height="1024"><g transform="translate(0 0)"><path d="M350 159.5L354 163.5L350 167.5M354 163.5H460.5V197.5H384.5V176.5H412.5M429.5 176.5H436.5V163.5M378.5 163.5V258.5H456.5V253.5M432.5 197.5V238.5M427 238.5H438M432.5 231.5H456.5V235.5" stroke="#000" stroke-width="1" fill="none"/><rect x="412.5" y="173.5" width="17" height="7" stroke="#000" stroke-width="1" fill="none"/><circle cx="406" cy="197.3" r="8.6" stroke="#000" stroke-width="1.25" fill="none"/><path d="M402.5 192.5V202.5L410 197.5Z" stroke="#000" stroke-width="1" fill="none"/><path d="M410.5 192V203" stroke="#000" stroke-width="1" fill="none"/><path d="M395.8 190.9L390.1 185.2" stroke="#000" stroke-width="1"/><path d="M388.3 183.4L391.1 184.3L389.2 186.2Z" fill="#000"/><path d="M398.8 186.8L393.2 181.6" stroke="#000" stroke-width="1"/><path d="M391.3 179.8L394.1 180.6L392.3 182.5Z" fill="#000"/><rect x="446.5" y="152.5" width="79" height="52" stroke="#000" stroke-width="1" fill="none"/><circle cx="460.3" cy="177.3" r="8.6" stroke="#000" stroke-width="1.25" fill="none"/><path d="M455.5 173.5H465.5L460.5 180.5Z" stroke="#000" stroke-width="1" fill="none"/><path d="M455 180.5H466" stroke="#000" stroke-width="1" fill="none"/><path d="M466.2 166.8L472.3 160.8" stroke="#000" stroke-width="1"/><path d="M474.2 159.0L473.2 161.7L471.4 159.9Z" fill="#000"/><path d="M470.2 169.8L476.3 164.3" stroke="#000" stroke-width="1"/><path d="M478.2 162.6L477.1 165.3L475.4 163.4Z" fill="#000"/><circle cx="506.5" cy="180" r="10.3" stroke="#000" stroke-width="1.25" fill="none"/><path d="M502.5 172V188.5" stroke="#000" stroke-width="1.3"/><path d="M502.5 176.5L511.5 172V166.5H593.5V265.5M502.5 184L511.5 188.5V197.5H569.5M569.5 166.5V173.5M569.5 190.5V227.5M507.5 227.5H579.5M583.5 223L579.5 227.5L583.5 232M588 265.5H599M507.5 258.5H593.5" stroke="#000" stroke-width="1" fill="none"/><path d="M503.5 176L507 172.3L508 175.5Z" fill="#000"/><path d="M487.2 164.0L493.2 170.0" stroke="#000" stroke-width="1"/><path d="M495.0 171.8L492.2 170.9L494.1 169.0Z" fill="#000"/><path d="M490.2 161.0L496.2 167.0" stroke="#000" stroke-width="1"/><path d="M498.0 168.8L495.2 167.9L497.1 166.0Z" fill="#000"/><circle cx="552" cy="166.3" r="8.9" stroke="#000" stroke-width="1.25" fill="none"/><path d="M547.5 161V171.5M555.5 161.5V171.5L547.5 166.5Z" stroke="#000" stroke-width="1" fill="none"/><path d="M559.1 156.9L565.5 150.5" stroke="#000" stroke-width="1"/><path d="M567.3 148.7L566.4 151.5L564.5 149.6Z" fill="#000"/><path d="M562.2 159.9L568.6 153.5" stroke="#000" stroke-width="1"/><path d="M570.4 151.7L569.5 154.5L567.6 152.6Z" fill="#000"/><rect x="566.5" y="173.5" width="6" height="17" stroke="#000" stroke-width="1" fill="none"/><rect x="443.5" y="217.5" width="78" height="51" stroke="#000" stroke-width="1" fill="none"/><circle cx="461.7" cy="244.8" r="10.4" stroke="#000" stroke-width="1.25" fill="none"/><path d="M465.5 237V252.5" stroke="#000" stroke-width="1.3"/><path d="M456.5 235.5L465.5 241M465.5 248.5L456.5 253.5" stroke="#000" stroke-width="1" fill="none"/><path d="M464.5 241.5L460.5 238.3L460 241.5Z" fill="#000"/><path d="M477.7 226.5L472.0 232.1" stroke="#000" stroke-width="1"/><path d="M470.1 233.9L471.1 231.2L472.9 233.0Z" fill="#000"/><path d="M480.9 229.2L475.1 235.0" stroke="#000" stroke-width="1"/><path d="M473.3 236.8L474.2 234.0L476.1 235.9Z" fill="#000"/><circle cx="507.8" cy="242.5" r="8.9" stroke="#000" stroke-width="1.25" fill="none"/><path d="M507.5 227.5V258.5M502.5 238.5H513.5L507.5 245.5ZM502 246.5H514" stroke="#000" stroke-width="1" fill="none"/><path d="M502.0 231.5L496.0 225.5" stroke="#000" stroke-width="1"/><path d="M494.2 223.7L497.0 224.6L495.1 226.5Z" fill="#000"/><path d="M497.7 234.7L491.7 228.7" stroke="#000" stroke-width="1"/><path d="M489.9 226.9L492.7 227.8L490.8 229.7Z" fill="#000"/><text x="347" y="156.3" font-family="Liberation Sans" font-style="italic" font-weight="bold" font-size="6.8" textLength="34.5" lengthAdjust="spacingAndGlyphs" fill="#000">PIN 2  LPT1</text><text x="415.2" y="169.9" font-family="Liberation Sans" font-style="italic" font-size="6.4" textLength="8" lengthAdjust="spacingAndGlyphs" fill="#000">R1</text><text x="400" y="182" font-family="Liberation Sans" font-style="italic" font-size="6.4" textLength="11" lengthAdjust="spacingAndGlyphs" fill="#000">HL1</text><text x="415.2" y="185.6" font-family="Liberation Sans" font-style="italic" font-weight="bold" font-size="5.2" textLength="5.2" lengthAdjust="spacingAndGlyphs" fill="#000">1k</text><text x="545" y="152" font-family="Liberation Sans" font-style="italic" font-size="6.4" textLength="12" lengthAdjust="spacingAndGlyphs" fill="#000">HL2</text><text x="575" y="178.2" font-family="Liberation Sans" font-style="italic" font-size="6.4" textLength="8" lengthAdjust="spacingAndGlyphs" fill="#000">R2</text><text x="575" y="186.8" font-family="Liberation Sans" font-style="italic" font-weight="bold" font-size="5.2" textLength="5.2" lengthAdjust="spacingAndGlyphs" fill="#000">1k</text></g><g transform="translate(0 123)"><path d="M350 159.5L354 163.5L350 167.5M354 163.5H460.5V197.5H384.5V176.5H412.5M429.5 176.5H436.5V163.5M378.5 163.5V258.5H456.5V253.5M432.5 197.5V238.5M427 238.5H438M432.5 231.5H456.5V235.5" stroke="#000" stroke-width="1" fill="none"/><rect x="412.5" y="173.5" width="17" height="7" stroke="#000" stroke-width="1" fill="none"/><circle cx="406" cy="197.3" r="8.6" stroke="#000" stroke-width="1.25" fill="none"/><path d="M402.5 192.5V202.5L410 197.5Z" stroke="#000" stroke-width="1" fill="none"/><path d="M410.5 192V203" stroke="#000" stroke-width="1" fill="none"/><path d="M395.8 190.9L390.1 185.2" stroke="#000" stroke-width="1"/><path d="M388.3 183.4L391.1 184.3L389.2 186.2Z" fill="#000"/><path d="M398.8 186.8L393.2 181.6" stroke="#000" stroke-width="1"/><path d="M391.3 179.8L394.1 180.6L392.3 182.5Z" fill="#000"/><rect x="446.5" y="152.5" width="79" height="52" stroke="#000" stroke-width="1" fill="none"/><circle cx="460.3" cy="177.3" r="8.6" stroke="#000" stroke-width="1.25" fill="none"/><path d="M455.5 173.5H465.5L460.5 180.5Z" stroke="#000" stroke-width="1" fill="none"/><path d="M455 180.5H466" stroke="#000" stroke-width="1" fill="none"/><path d="M466.2 166.8L472.3 160.8" stroke="#000" stroke-width="1"/><path d="M474.2 159.0L473.2 161.7L471.4 159.9Z" fill="#000"/><path d="M470.2 169.8L476.3 164.3" stroke="#000" stroke-width="1"/><path d="M478.2 162.6L477.1 165.3L475.4 163.4Z" fill="#000"/><circle cx="506.5" cy="180" r="10.3" stroke="#000" stroke-width="1.25" fill="none"/><path d="M502.5 172V188.5" stroke="#000" stroke-width="1.3"/><path d="M502.5 176.5L511.5 172V166.5H593.5V265.5M502.5 184L511.5 188.5V197.5H569.5M569.5 166.5V173.5M569.5 190.5V227.5M507.5 227.5H579.5M583.5 223L579.5 227.5L583.5 232M588 265.5H599M507.5 258.5H593.5" stroke="#000" stroke-width="1" fill="none"/><path d="M503.5 176L507 172.3L508 175.5Z" fill="#000"/><path d="M487.2 164.0L493.2 170.0" stroke="#000" stroke-width="1"/><path d="M495.0 171.8L492.2 170.9L494.1 169.0Z" fill="#000"/><path d="M490.2 161.0L496.2 167.0" stroke="#000" stroke-width="1"/><path d="M498.0 168.8L495.2 167.9L497.1 166.0Z" fill="#000"/><circle cx="552" cy="166.3" r="8.9" stroke="#000" stroke-width="1.25" fill="none"/><path d="M547.5 161V171.5M555.5 161.5V171.5L547.5 166.5Z" stroke="#000" stroke-width="1" fill="none"/><path d="M559.1 156.9L565.5 150.5" stroke="#000" stroke-width="1"/><path d="M567.3 148.7L566.4 151.5L564.5 149.6Z" fill="#000"/><path d="M562.2 159.9L568.6 153.5" stroke="#000" stroke-width="1"/><path d="M570.4 151.7L569.5 154.5L567.6 152.6Z" fill="#000"/><rect x="566.5" y="173.5" width="6" height="17" stroke="#000" stroke-width="1" fill="none"/><rect x="443.5" y="217.5" width="78" height="51" stroke="#000" stroke-width="1" fill="none"/><circle cx="461.7" cy="244.8" r="10.4" stroke="#000" stroke-width="1.25" fill="none"/><path d="M465.5 237V252.5" stroke="#000" stroke-width="1.3"/><path d="M456.5 235.5L465.5 241M465.5 248.5L456.5 253.5" stroke="#000" stroke-width="1" fill="none"/><path d="M464.5 241.5L460.5 238.3L460 241.5Z" fill="#000"/><path d="M477.7 226.5L472.0 232.1" stroke="#000" stroke-width="1"/><path d="M470.1 233.9L471.1 231.2L472.9 233.0Z" fill="#000"/><path d="M480.9 229.2L475.1 235.0" stroke="#000" stroke-width="1"/><path d="M473.3 236.8L474.2 234.0L476.1 235.9Z" fill="#000"/><circle cx="507.8" cy="242.5" r="8.9" stroke="#000" stroke-width="1.25" fill="none"/><path d="M507.5 227.5V258.5M502.5 238.5H513.5L507.5 245.5ZM502 246.5H514" stroke="#000" stroke-width="1" fill="none"/><path d="M502.0 231.5L496.0 225.5" stroke="#000" stroke-width="1"/><path d="M494.2 223.7L497.0 224.6L495.1 226.5Z" fill="#000"/><path d="M497.7 234.7L491.7 228.7" stroke="#000" stroke-width="1"/><path d="M489.9 226.9L492.7 227.8L490.8 229.7Z" fill="#000"/><text x="347" y="156.3" font-family="Liberation Sans" font-style="italic" font-weight="bold" font-size="6.8" textLength="34.5" lengthAdjust="spacingAndGlyphs" fill="#000">PIN 3  LPT1</text><text x="415.2" y="169.9" font-family="Liberation Sans" font-style="italic" font-size="6.4" textLength="8" lengthAdjust="spacingAndGlyphs" fill="#000">R3</text><text x="400" y="182" font-family="Liberation Sans" font-style="italic" font-size="6.4" textLength="11" lengthAdjust="spacingAndGlyphs" fill="#000">HL3</text><text x="415.2" y="185.6" font-family="Liberation Sans" font-style="italic" font-weight="bold" font-size="5.2" textLength="5.2" lengthAdjust="spacingAndGlyphs" fill="#000">1k</text><text x="545" y="152" font-family="Liberation Sans" font-style="italic" font-size="6.4" textLength="12" lengthAdjust="spacingAndGlyphs" fill="#000">HL4</text><text x="575" y="178.2" font-family="Liberation Sans" font-style="italic" font-size="6.4" textLength="8" lengthAdjust="spacingAndGlyphs" fill="#000">R4</text><text x="575" y="186.8" font-family="Liberation Sans" font-style="italic" font-weight="bold" font-size="5.2" textLength="5.2" lengthAdjust="spacingAndGlyphs" fill="#000">1k</text></g><g transform="translate(0 242)"><path d="M350 159.5L354 163.5L350 167.5M354 163.5H460.5V197.5H384.5V176.5H412.5M429.5 176.5H436.5V163.5M378.5 163.5V258.5H456.5V253.5M432.5 197.5V238.5M427 238.5H438M432.5 231.5H456.5V235.5" stroke="#000" stroke-width="1" fill="none"/><rect x="412.5" y="173.5" width="17" height="7" stroke="#000" stroke-width="1" fill="none"/><circle cx="406" cy="197.3" r="8.6" stroke="#000" stroke-width="1.25" fill="none"/><path d="M402.5 192.5V202.5L410 197.5Z" stroke="#000" stroke-width="1" fill="none"/><path d="M410.5 192V203" stroke="#000" stroke-width="1" fill="none"/><path d="M395.8 190.9L390.1 185.2" stroke="#000" stroke-width="1"/><path d="M388.3 183.4L391.1 184.3L389.2 186.2Z" fill="#000"/><path d="M398.8 186.8L393.2 181.6" stroke="#000" stroke-width="1"/><path d="M391.3 179.8L394.1 180.6L392.3 182.5Z" fill="#000"/><rect x="446.5" y="152.5" width="79" height="52" stroke="#000" stroke-width="1" fill="none"/><circle cx="460.3" cy="177.3" r="8.6" stroke="#000" stroke-width="1.25" fill="none"/><path d="M455.5 173.5H465.5L460.5 180.5Z" stroke="#000" stroke-width="1" fill="none"/><path d="M455 180.5H466" stroke="#000" stroke-width="1" fill="none"/><path d="M466.2 166.8L472.3 160.8" stroke="#000" stroke-width="1"/><path d="M474.2 159.0L473.2 161.7L471.4 159.9Z" fill="#000"/><path d="M470.2 169.8L476.3 164.3" stroke="#000" stroke-width="1"/><path d="M478.2 162.6L477.1 165.3L475.4 163.4Z" fill="#000"/><circle cx="506.5" cy="180" r="10.3" stroke="#000" stroke-width="1.25" fill="none"/><path d="M502.5 172V188.5" stroke="#000" stroke-width="1.3"/><path d="M502.5 176.5L511.5 172V166.5H593.5V265.5M502.5 184L511.5 188.5V197.5H569.5M569.5 166.5V173.5M569.5 190.5V227.5M507.5 227.5H579.5M583.5 223L579.5 227.5L583.5 232M588 265.5H599M507.5 258.5H593.5" stroke="#000" stroke-width="1" fill="none"/><path d="M503.5 176L507 172.3L508 175.5Z" fill="#000"/><path d="M487.2 164.0L493.2 170.0" stroke="#000" stroke-width="1"/><path d="M495.0 171.8L492.2 170.9L494.1 169.0Z" fill="#000"/><path d="M490.2 161.0L496.2 167.0" stroke="#000" stroke-width="1"/><path d="M498.0 168.8L495.2 167.9L497.1 166.0Z" fill="#000"/><circle cx="552" cy="166.3" r="8.9" stroke="#000" stroke-width="1.25" fill="none"/><path d="M547.5 161V171.5M555.5 161.5V171.5L547.5 166.5Z" stroke="#000" stroke-width="1" fill="none"/><path d="M559.1 156.9L565.5 150.5" stroke="#000" stroke-width="1"/><path d="M567.3 148.7L566.4 151.5L564.5 149.6Z" fill="#000"/><path d="M562.2 159.9L568.6 153.5" stroke="#000" stroke-width="1"/><path d="M570.4 151.7L569.5 154.5L567.6 152.6Z" fill="#000"/><rect x="566.5" y="173.5" width="6" height="17" stroke="#000" stroke-width="1" fill="none"/><rect x="443.5" y="217.5" width="78" height="51" stroke="#000" stroke-width="1" fill="none"/><circle cx="461.7" cy="244.8" r="10.4" stroke="#000" stroke-width="1.25" fill="none"/><path d="M465.5 237V252.5" stroke="#000" stroke-width="1.3"/><path d="M456.5 235.5L465.5 241M465.5 248.5L456.5 253.5" stroke="#000" stroke-width="1" fill="none"/><path d="M464.5 241.5L460.5 238.3L460 241.5Z" fill="#000"/><path d="M477.7 226.5L472.0 232.1" stroke="#000" stroke-width="1"/><path d="M470.1 233.9L471.1 231.2L472.9 233.0Z" fill="#000"/><path d="M480.9 229.2L475.1 235.0" stroke="#000" stroke-width="1"/><path d="M473.3 236.8L474.2 234.0L476.1 235.9Z" fill="#000"/><circle cx="507.8" cy="242.5" r="8.9" stroke="#000" stroke-width="1.25" fill="none"/><path d="M507.5 227.5V258.5M502.5 238.5H513.5L507.5 245.5ZM502 246.5H514" stroke="#000" stroke-width="1" fill="none"/><path d="M502.0 231.5L496.0 225.5" stroke="#000" stroke-width="1"/><path d="M494.2 223.7L497.0 224.6L495.1 226.5Z" fill="#000"/><path d="M497.7 234.7L491.7 228.7" stroke="#000" stroke-width="1"/><path d="M489.9 226.9L492.7 227.8L490.8 229.7Z" fill="#000"/><text x="347" y="156.3" font-family="Liberation Sans" font-style="italic" font-weight="bold" font-size="6.8" textLength="34.5" lengthAdjust="spacingAndGlyphs" fill="#000">PIN 14  LPT1</text><text x="415.2" y="169.9" font-family="Liberation Sans" font-style="italic" font-size="6.4" textLength="8" lengthAdjust="spacingAndGlyphs" fill="#000">R5</text><text x="400" y="182" font-family="Liberation Sans" font-style="italic" font-size="6.4" textLength="11" lengthAdjust="spacingAndGlyphs" fill="#000">HL5</text><text x="415.2" y="185.6" font-family="Liberation Sans" font-style="italic" font-weight="bold" font-size="5.2" textLength="5.2" lengthAdjust="spacingAndGlyphs" fill="#000">1k</text><text x="545" y="152" font-family="Liberation Sans" font-style="italic" font-size="6.4" textLength="12" lengthAdjust="spacingAndGlyphs" fill="#000">HL6</text><text x="575" y="178.2" font-family="Liberation Sans" font-style="italic" font-size="6.4" textLength="8" lengthAdjust="spacingAndGlyphs" fill="#000">R6</text><text x="575" y="186.8" font-family="Liberation Sans" font-style="italic" font-weight="bold" font-size="5.2" textLength="5.2" lengthAdjust="spacingAndGlyphs" fill="#000">1k</text></g><g transform="translate(-4 362)"><path d="M350 159.5L354 163.5L350 167.5M354 163.5H460.5V197.5H384.5V176.5H412.5M429.5 176.5H436.5V163.5M378.5 163.5V258.5H456.5V253.5M432.5 197.5V238.5M427 238.5H438M432.5 231.5H456.5V235.5" stroke="#000" stroke-width="1" fill="none"/><rect x="412.5" y="173.5" width="17" height="7" stroke="#000" stroke-width="1" fill="none"/><circle cx="406" cy="197.3" r="8.6" stroke="#000" stroke-width="1.25" fill="none"/><path d="M402.5 192.5V202.5L410 197.5Z" stroke="#000" stroke-width="1" fill="none"/><path d="M410.5 192V203" stroke="#000" stroke-width="1" fill="none"/><path d="M395.8 190.9L390.1 185.2" stroke="#000" stroke-width="1"/><path d="M388.3 183.4L391.1 184.3L389.2 186.2Z" fill="#000"/><path d="M398.8 186.8L393.2 181.6" stroke="#000" stroke-width="1"/><path d="M391.3 179.8L394.1 180.6L392.3 182.5Z" fill="#000"/><rect x="446.5" y="152.5" width="79" height="52" stroke="#000" stroke-width="1" fill="none"/><circle cx="460.3" cy="177.3" r="8.6" stroke="#000" stroke-width="1.25" fill="none"/><path d="M455.5 173.5H465.5L460.5 180.5Z" stroke="#000" stroke-width="1" fill="none"/><path d="M455 180.5H466" stroke="#000" stroke-width="1" fill="none"/><path d="M466.2 166.8L472.3 160.8" stroke="#000" stroke-width="1"/><path d="M474.2 159.0L473.2 161.7L471.4 159.9Z" fill="#000"/><path d="M470.2 169.8L476.3 164.3" stroke="#000" stroke-width="1"/><path d="M478.2 162.6L477.1 165.3L475.4 163.4Z" fill="#000"/><circle cx="506.5" cy="180" r="10.3" stroke="#000" stroke-width="1.25" fill="none"/><path d="M502.5 172V188.5" stroke="#000" stroke-width="1.3"/><path d="M502.5 176.5L511.5 172V166.5H593.5V265.5M502.5 184L511.5 188.5V197.5H569.5M569.5 166.5V173.5M569.5 190.5V227.5M507.5 227.5H579.5M583.5 223L579.5 227.5L583.5 232M588 265.5H599M507.5 258.5H593.5" stroke="#000" stroke-width="1" fill="none"/><path d="M503.5 176L507 172.3L508 175.5Z" fill="#000"/><path d="M487.2 164.0L493.2 170.0" stroke="#000" stroke-width="1"/><path d="M495.0 171.8L492.2 170.9L494.1 169.0Z" fill="#000"/><path d="M490.2 161.0L496.2 167.0" stroke="#000" stroke-width="1"/><path d="M498.0 168.8L495.2 167.9L497.1 166.0Z" fill="#000"/><circle cx="552" cy="166.3" r="8.9" stroke="#000" stroke-width="1.25" fill="none"/><path d="M547.5 161V171.5M555.5 161.5V171.5L547.5 166.5Z" stroke="#000" stroke-width="1" fill="none"/><path d="M559.1 156.9L565.5 150.5" stroke="#000" stroke-width="1"/><path d="M567.3 148.7L566.4 151.5L564.5 149.6Z" fill="#000"/><path d="M562.2 159.9L568.6 153.5" stroke="#000" stroke-width="1"/><path d="M570.4 151.7L569.5 154.5L567.6 152.6Z" fill="#000"/><rect x="566.5" y="173.5" width="6" height="17" stroke="#000" stroke-width="1" fill="none"/><rect x="443.5" y="217.5" width="78" height="51" stroke="#000" stroke-width="1" fill="none"/><circle cx="461.7" cy="244.8" r="10.4" stroke="#000" stroke-width="1.25" fill="none"/><path d="M465.5 237V252.5" stroke="#000" stroke-width="1.3"/><path d="M456.5 235.5L465.5 241M465.5 248.5L456.5 253.5" stroke="#000" stroke-width="1" fill="none"/><path d="M464.5 241.5L460.5 238.3L460 241.5Z" fill="#000"/><path d="M477.7 226.5L472.0 232.1" stroke="#000" stroke-width="1"/><path d="M470.1 233.9L471.1 231.2L472.9 233.0Z" fill="#000"/><path d="M480.9 229.2L475.1 235.0" stroke="#000" stroke-width="1"/><path d="M473.3 236.8L474.2 234.0L476.1 235.9Z" fill="#000"/><circle cx="507.8" cy="242.5" r="8.9" stroke="#000" stroke-width="1.25" fill="none"/><path d="M507.5 227.5V258.5M502.5 238.5H513.5L507.5 245.5ZM502 246.5H514" stroke="#000" stroke-width="1" fill="none"/><path d="M502.0 231.5L496.0 225.5" stroke="#000" stroke-width="1"/><path d="M494.2 223.7L497.0 224.6L495.1 226.5Z" fill="#000"/><path d="M497.7 234.7L491.7 228.7" stroke="#000" stroke-width="1"/><path d="M489.9 226.9L492.7 227.8L490.8 229.7Z" fill="#000"/><text x="347" y="156.3" font-family="Liberation Sans" font-style="italic" font-weight="bold" font-size="6.8" textLength="34.5" lengthAdjust="spacingAndGlyphs" fill="#000">PIN 15  LPT1</text><text x="415.2" y="169.9" font-family="Liberation Sans" font-style="italic" font-size="6.4" textLength="8" lengthAdjust="spacingAndGlyphs" fill="#000">R7</text><text x="400" y="182" font-family="Liberation Sans" font-style="italic" font-size="6.4" textLength="11" lengthAdjust="spacingAndGlyphs" fill="#000">HL7</text><text x="415.2" y="185.6" font-family="Liberation Sans" font-style="italic" font-weight="bold" font-size="5.2" textLength="5.2" lengthAdjust="spacingAndGlyphs" fill="#000">1k</text><text x="545" y="152" font-family="Liberation Sans" font-style="italic" font-size="6.4" textLength="12" lengthAdjust="spacingAndGlyphs" fill="#000">HL8</text><text x="575" y="178.2" font-family="Liberation Sans" font-style="italic" font-size="6.4" textLength="8" lengthAdjust="spacingAndGlyphs" fill="#000">R8</text><text x="575" y="186.8" font-family="Liberation Sans" font-style="italic" font-weight="bold" font-size="5.2" textLength="5.2" lengthAdjust="spacingAndGlyphs" fill="#000">1k</text></g><g transform="translate(-7 481)"><path d="M350 159.5L354 163.5L350 167.5M354 163.5H460.5V197.5H384.5V176.5H412.5M429.5 176.5H436.5V163.5M378.5 163.5V258.5H456.5V253.5M432.5 197.5V238.5M427 238.5H438M432.5 231.5H456.5V235.5" stroke="#000" stroke-width="1" fill="none"/><rect x="412.5" y="173.5" width="17" height="7" stroke="#000" stroke-width="1" fill="none"/><circle cx="406" cy="197.3" r="8.6" stroke="#000" stroke-width="1.25" fill="none"/><path d="M402.5 192.5V202.5L410 197.5Z" stroke="#000" stroke-width="1" fill="none"/><path d="M410.5 192V203" stroke="#000" stroke-width="1" fill="none"/><path d="M395.8 190.9L390.1 185.2" stroke="#000" stroke-width="1"/><path d="M388.3 183.4L391.1 184.3L389.2 186.2Z" fill="#000"/><path d="M398.8 186.8L393.2 181.6" stroke="#000" stroke-width="1"/><path d="M391.3 179.8L394.1 180.6L392.3 182.5Z" fill="#000"/><rect x="446.5" y="152.5" width="79" height="52" stroke="#000" stroke-width="1" fill="none"/><circle cx="460.3" cy="177.3" r="8.6" stroke="#000" stroke-width="1.25" fill="none"/><path d="M455.5 173.5H465.5L460.5 180.5Z" stroke="#000" stroke-width="1" fill="none"/><path d="M455 180.5H466" stroke="#000" stroke-width="1" fill="none"/><path d="M466.2 166.8L472.3 160.8" stroke="#000" stroke-width="1"/><path d="M474.2 159.0L473.2 161.7L471.4 159.9Z" fill="#000"/><path d="M470.2 169.8L476.3 164.3" stroke="#000" stroke-width="1"/><path d="M478.2 162.6L477.1 165.3L475.4 163.4Z" fill="#000"/><circle cx="506.5" cy="180" r="10.3" stroke="#000" stroke-width="1.25" fill="none"/><path d="M502.5 172V188.5" stroke="#000" stroke-width="1.3"/><path d="M502.5 176.5L511.5 172V166.5H593.5V265.5M502.5 184L511.5 188.5V197.5H569.5M569.5 166.5V173.5M569.5 190.5V227.5M507.5 227.5H579.5M583.5 223L579.5 227.5L583.5 232M588 265.5H599M507.5 258.5H593.5" stroke="#000" stroke-width="1" fill="none"/><path d="M503.5 176L507 172.3L508 175.5Z" fill="#000"/><path d="M487.2 164.0L493.2 170.0" stroke="#000" stroke-width="1"/><path d="M495.0 171.8L492.2 170.9L494.1 169.0Z" fill="#000"/><path d="M490.2 161.0L496.2 167.0" stroke="#000" stroke-width="1"/><path d="M498.0 168.8L495.2 167.9L497.1 166.0Z" fill="#000"/><circle cx="552" cy="166.3" r="8.9" stroke="#000" stroke-width="1.25" fill="none"/><path d="M547.5 161V171.5M555.5 161.5V171.5L547.5 166.5Z" stroke="#000" stroke-width="1" fill="none"/><path d="M559.1 156.9L565.5 150.5" stroke="#000" stroke-width="1"/><path d="M567.3 148.7L566.4 151.5L564.5 149.6Z" fill="#000"/><path d="M562.2 159.9L568.6 153.5" stroke="#000" stroke-width="1"/><path d="M570.4 151.7L569.5 154.5L567.6 152.6Z" fill="#000"/><rect x="566.5" y="173.5" width="6" height="17" stroke="#000" stroke-width="1" fill="none"/><rect x="443.5" y="217.5" width="78" height="51" stroke="#000" stroke-width="1" fill="none"/><circle cx="461.7" cy="244.8" r="10.4" stroke="#000" stroke-width="1.25" fill="none"/><path d="M465.5 237V252.5" stroke="#000" stroke-width="1.3"/><path d="M456.5 235.5L465.5 241M465.5 248.5L456.5 253.5" stroke="#000" stroke-width="1" fill="none"/><path d="M464.5 241.5L460.5 238.3L460 241.5Z" fill="#000"/><path d="M477.7 226.5L472.0 232.1" stroke="#000" stroke-width="1"/><path d="M470.1 233.9L471.1 231.2L472.9 233.0Z" fill="#000"/><path d="M480.9 229.2L475.1 235.0" stroke="#000" stroke-width="1"/><path d="M473.3 236.8L474.2 234.0L476.1 235.9Z" fill="#000"/><circle cx="507.8" cy="242.5" r="8.9" stroke="#000" stroke-width="1.25" fill="none"/><path d="M507.5 227.5V258.5M502.5 238.5H513.5L507.5 245.5ZM502 246.5H514" stroke="#000" stroke-width="1" fill="none"/><path d="M502.0 231.5L496.0 225.5" stroke="#000" stroke-width="1"/><path d="M494.2 223.7L497.0 224.6L495.1 226.5Z" fill="#000"/><path d="M497.7 234.7L491.7 228.7" stroke="#000" stroke-width="1"/><path d="M489.9 226.9L492.7 227.8L490.8 229.7Z" fill="#000"/><text x="347" y="156.3" font-family="Liberation Sans" font-style="italic" font-weight="bold" font-size="6.8" textLength="34.5" lengthAdjust="spacingAndGlyphs" fill="#000">PIN 16  LPT1</text><text x="415.2" y="169.9" font-family="Liberation Sans" font-style="italic" font-size="6.4" textLength="8" lengthAdjust="spacingAndGlyphs" fill="#000">R9</text><text x="400" y="182" font-family="Liberation Sans" font-style="italic" font-size="6.4" textLength="11" lengthAdjust="spacingAndGlyphs" fill="#000">HL9</text><text x="415.2" y="185.6" font-family="Liberation Sans" font-style="italic" font-weight="bold" font-size="5.2" textLength="5.2" lengthAdjust="spacingAndGlyphs" fill="#000">1k</text><text x="545" y="152" font-family="Liberation Sans" font-style="italic" font-size="6.4" textLength="14" lengthAdjust="spacingAndGlyphs" fill="#000">HL10</text><text x="575" y="178.2" font-family="Liberation Sans" font-style="italic" font-size="6.4" textLength="11" lengthAdjust="spacingAndGlyphs" fill="#000">R10</text><text x="575" y="186.8" font-family="Liberation Sans" font-style="italic" font-weight="bold" font-size="5.2" textLength="5.2" lengthAdjust="spacingAndGlyphs" fill="#000">1k</text></g><g transform="translate(307 3)"><path d="M350 159.5L354 163.5L350 167.5M354 163.5H460.5V197.5H384.5V176.5H412.5M429.5 176.5H436.5V163.5M378.5 163.5V258.5H456.5V253.5M432.5 197.5V238.5M427 238.5H438M432.5 231.5H456.5V235.5" stroke="#000" stroke-width="1" fill="none"/><rect x="412.5" y="173.5" width="17" height="7" stroke="#000" stroke-width="1" fill="none"/><circle cx="406" cy="197.3" r="8.6" stroke="#000" stroke-width="1.25" fill="none"/><path d="M402.5 192.5V202.5L410 197.5Z" stroke="#000" stroke-width="1" fill="none"/><path d="M410.5 192V203" stroke="#000" stroke-width="1" fill="none"/><path d="M395.8 190.9L390.1 185.2" stroke="#000" stroke-width="1"/><path d="M388.3 183.4L391.1 184.3L389.2 186.2Z" fill="#000"/><path d="M398.8 186.8L393.2 181.6" stroke="#000" stroke-width="1"/><path d="M391.3 179.8L394.1 180.6L392.3 182.5Z" fill="#000"/><rect x="446.5" y="152.5" width="79" height="52" stroke="#000" stroke-width="1" fill="none"/><circle cx="460.3" cy="177.3" r="8.6" stroke="#000" stroke-width="1.25" fill="none"/><path d="M455.5 173.5H465.5L460.5 180.5Z" stroke="#000" stroke-width="1" fill="none"/><path d="M455 180.5H466" stroke="#000" stroke-width="1" fill="none"/><path d="M466.2 166.8L472.3 160.8" stroke="#000" stroke-width="1"/><path d="M474.2 159.0L473.2 161.7L471.4 159.9Z" fill="#000"/><path d="M470.2 169.8L476.3 164.3" stroke="#000" stroke-width="1"/><path d="M478.2 162.6L477.1 165.3L475.4 163.4Z" fill="#000"/><circle cx="506.5" cy="180" r="10.3" stroke="#000" stroke-width="1.25" fill="none"/><path d="M502.5 172V188.5" stroke="#000" stroke-width="1.3"/><path d="M502.5 176.5L511.5 172V166.5H593.5V265.5M502.5 184L511.5 188.5V197.5H569.5M569.5 166.5V173.5M569.5 190.5V227.5M507.5 227.5H579.5M583.5 223L579.5 227.5L583.5 232M588 265.5H599M507.5 258.5H593.5" stroke="#000" stroke-width="1" fill="none"/><path d="M503.5 176L507 172.3L508 175.5Z" fill="#000"/><path d="M487.2 164.0L493.2 170.0" stroke="#000" stroke-width="1"/><path d="M495.0 171.8L492.2 170.9L494.1 169.0Z" fill="#000"/><path d="M490.2 161.0L496.2 167.0" stroke="#000" stroke-width="1"/><path d="M498.0 168.8L495.2 167.9L497.1 166.0Z" fill="#000"/><circle cx="552" cy="166.3" r="8.9" stroke="#000" stroke-width="1.25" fill="none"/><path d="M547.5 161V171.5M555.5 161.5V171.5L547.5 166.5Z" stroke="#000" stroke-width="1" fill="none"/><path d="M559.1 156.9L565.5 150.5" stroke="#000" stroke-width="1"/><path d="M567.3 148.7L566.4 151.5L564.5 149.6Z" fill="#000"/><path d="M562.2 159.9L568.6 153.5" stroke="#000" stroke-width="1"/><path d="M570.4 151.7L569.5 154.5L567.6 152.6Z" fill="#000"/><rect x="566.5" y="173.5" width="6" height="17" stroke="#000" stroke-width="1" fill="none"/><rect x="443.5" y="217.5" width="78" height="51" stroke="#000" stroke-width="1" fill="none"/><circle cx="461.7" cy="244.8" r="10.4" stroke="#000" stroke-width="1.25" fill="none"/><path d="M465.5 237V252.5" stroke="#000" stroke-width="1.3"/><path d="M456.5 235.5L465.5 241M465.5 248.5L456.5 253.5" stroke="#000" stroke-width="1" fill="none"/><path d="M464.5 241.5L460.5 238.3L460 241.5Z" fill="#000"/><path d="M477.7 226.5L472.0 232.1" stroke="#000" stroke-width="1"/><path d="M470.1 233.9L471.1 231.2L472.9 233.0Z" fill="#000"/><path d="M480.9 229.2L475.1 235.0" stroke="#000" stroke-width="1"/><path d="M473.3 236.8L474.2 234.0L476.1 235.9Z" fill="#000"/><circle cx="507.8" cy="242.5" r="8.9" stroke="#000" stroke-width="1.25" fill="none"/><path d="M507.5 227.5V258.5M502.5 238.5H513.5L507.5 245.5ZM502 246.5H514" stroke="#000" stroke-width="1" fill="none"/><path d="M502.0 231.5L496.0 225.5" stroke="#000" stroke-width="1"/><path d="M494.2 223.7L497.0 224.6L495.1 226.5Z" fill="#000"/><path d="M497.7 234.7L491.7 228.7" stroke="#000" stroke-width="1"/><path d="M489.9 226.9L492.7 227.8L490.8 229.7Z" fill="#000"/><text x="347" y="156.3" font-family="Liberation Sans" font-style="italic" font-weight="bold" font-size="6.8" textLength="34.5" lengthAdjust="spacingAndGlyphs" fill="#000">PIN 17  LPT1</text><text x="415.2" y="169.9" font-family="Liberation Sans" font-style="italic" font-size="6.4" textLength="11" lengthAdjust="spacingAndGlyphs" fill="#000">R11</text><text x="400" y="182" font-family="Liberation Sans" font-style="italic" font-size="6.4" textLength="13" lengthAdjust="spacingAndGlyphs" fill="#000">HL11</text><text x="415.2" y="185.6" font-family="Liberation Sans" font-style="italic" font-weight="bold" font-size="5.2" textLength="5.2" lengthAdjust="spacingAndGlyphs" fill="#000">1k</text><text x="545" y="152" font-family="Liberation Sans" font-style="italic" font-size="6.4" textLength="14" lengthAdjust="spacingAndGlyphs" fill="#000">HL12</text><text x="575" y="178.2" font-family="Liberation Sans" font-style="italic" font-size="6.4" textLength="11" lengthAdjust="spacingAndGlyphs" fill="#000">R12</text><text x="575" y="186.8" font-family="Liberation Sans" font-style="italic" font-weight="bold" font-size="5.2" textLength="5.2" lengthAdjust="spacingAndGlyphs" fill="#000">1k</text></g><g transform="translate(304 126)"><path d="M350 159.5L354 163.5L350 167.5M354 163.5H460.5V197.5H384.5V176.5H412.5M429.5 176.5H436.5V163.5M378.5 163.5V258.5H456.5V253.5M432.5 197.5V238.5M427 238.5H438M432.5 231.5H456.5V235.5" stroke="#000" stroke-width="1" fill="none"/><rect x="412.5" y="173.5" width="17" height="7" stroke="#000" stroke-width="1" fill="none"/><circle cx="406" cy="197.3" r="8.6" stroke="#000" stroke-width="1.25" fill="none"/><path d="M402.5 192.5V202.5L410 197.5Z" stroke="#000" stroke-width="1" fill="none"/><path d="M410.5 192V203" stroke="#000" stroke-width="1" fill="none"/><path d="M395.8 190.9L390.1 185.2" stroke="#000" stroke-width="1"/><path d="M388.3 183.4L391.1 184.3L389.2 186.2Z" fill="#000"/><path d="M398.8 186.8L393.2 181.6" stroke="#000" stroke-width="1"/><path d="M391.3 179.8L394.1 180.6L392.3 182.5Z" fill="#000"/><rect x="446.5" y="152.5" width="79" height="52" stroke="#000" stroke-width="1" fill="none"/><circle cx="460.3" cy="177.3" r="8.6" stroke="#000" stroke-width="1.25" fill="none"/><path d="M455.5 173.5H465.5L460.5 180.5Z" stroke="#000" stroke-width="1" fill="none"/><path d="M455 180.5H466" stroke="#000" stroke-width="1" fill="none"/><path d="M466.2 166.8L472.3 160.8" stroke="#000" stroke-width="1"/><path d="M474.2 159.0L473.2 161.7L471.4 159.9Z" fill="#000"/><path d="M470.2 169.8L476.3 164.3" stroke="#000" stroke-width="1"/><path d="M478.2 162.6L477.1 165.3L475.4 163.4Z" fill="#000"/><circle cx="506.5" cy="180" r="10.3" stroke="#000" stroke-width="1.25" fill="none"/><path d="M502.5 172V188.5" stroke="#000" stroke-width="1.3"/><path d="M502.5 176.5L511.5 172V166.5H593.5V265.5M502.5 184L511.5 188.5V197.5H569.5M569.5 166.5V173.5M569.5 190.5V227.5M507.5 227.5H579.5M583.5 223L579.5 227.5L583.5 232M588 265.5H599M507.5 258.5H593.5" stroke="#000" stroke-width="1" fill="none"/><path d="M503.5 176L507 172.3L508 175.5Z" fill="#000"/><path d="M487.2 164.0L493.2 170.0" stroke="#000" stroke-width="1"/><path d="M495.0 171.8L492.2 170.9L494.1 169.0Z" fill="#000"/><path d="M490.2 161.0L496.2 167.0" stroke="#000" stroke-width="1"/><path d="M498.0 168.8L495.2 167.9L497.1 166.0Z" fill="#000"/><circle cx="552" cy="166.3" r="8.9" stroke="#000" stroke-width="1.25" fill="none"/><path d="M547.5 161V171.5M555.5 161.5V171.5L547.5 166.5Z" stroke="#000" stroke-width="1" fill="none"/><path d="M559.1 156.9L565.5 150.5" stroke="#000" stroke-width="1"/><path d="M567.3 148.7L566.4 151.5L564.5 149.6Z" fill="#000"/><path d="M562.2 159.9L568.6 153.5" stroke="#000" stroke-width="1"/><path d="M570.4 151.7L569.5 154.5L567.6 152.6Z" fill="#000"/><rect x="566.5" y="173.5" width="6" height="17" stroke="#000" stroke-width="1" fill="none"/><rect x="443.5" y="217.5" width="78" height="51" stroke="#000" stroke-width="1" fill="none"/><circle cx="461.7" cy="244.8" r="10.4" stroke="#000" stroke-width="1.25" fill="none"/><path d="M465.5 237V252.5" stroke="#000" stroke-width="1.3"/><path d="M456.5 235.5L465.5 241M465.5 248.5L456.5 253.5" stroke="#000" stroke-width="1" fill="none"/><path d="M464.5 241.5L460.5 238.3L460 241.5Z" fill="#000"/><path d="M477.7 226.5L472.0 232.1" stroke="#000" stroke-width="1"/><path d="M470.1 233.9L471.1 231.2L472.9 233.0Z" fill="#000"/><path d="M480.9 229.2L475.1 235.0" stroke="#000" stroke-width="1"/><path d="M473.3 236.8L474.2 234.0L476.1 235.9Z" fill="#000"/><circle cx="507.8" cy="242.5" r="8.9" stroke="#000" stroke-width="1.25" fill="none"/><path d="M507.5 227.5V258.5M502.5 238.5H513.5L507.5 245.5ZM502 246.5H514" stroke="#000" stroke-width="1" fill="none"/><path d="M502.0 231.5L496.0 225.5" stroke="#000" stroke-width="1"/><path d="M494.2 223.7L497.0 224.6L495.1 226.5Z" fill="#000"/><path d="M497.7 234.7L491.7 228.7" stroke="#000" stroke-width="1"/><path d="M489.9 226.9L492.7 227.8L490.8 229.7Z" fill="#000"/><text x="347" y="156.3" font-family="Liberation Sans" font-style="italic" font-weight="bold" font-size="6.8" textLength="34.5" lengthAdjust="spacingAndGlyphs" fill="#000">PIN 6  LPT1</text><text x="415.2" y="169.9" font-family="Liberation Sans" font-style="italic" font-size="6.4" textLength="11" lengthAdjust="spacingAndGlyphs" fill="#000">R13</text><text x="400" y="182" font-family="Liberation Sans" font-style="italic" font-size="6.4" textLength="13" lengthAdjust="spacingAndGlyphs" fill="#000">HL13</text><text x="415.2" y="185.6" font-family="Liberation Sans" font-style="italic" font-weight="bold" font-size="5.2" textLength="5.2" lengthAdjust="spacingAndGlyphs" fill="#000">1k</text><text x="545" y="152" font-family="Liberation Sans" font-style="italic" font-size="6.4" textLength="14" lengthAdjust="spacingAndGlyphs" fill="#000">HL14</text><text x="575" y="178.2" font-family="Liberation Sans" font-style="italic" font-size="6.4" textLength="11" lengthAdjust="spacingAndGlyphs" fill="#000">R14</text><text x="575" y="186.8" font-family="Liberation Sans" font-style="italic" font-weight="bold" font-size="5.2" textLength="5.2" lengthAdjust="spacingAndGlyphs" fill="#000">1k</text></g><g transform="translate(301 246)"><path d="M350 159.5L354 163.5L350 167.5M354 163.5H460.5V197.5H384.5V176.5H412.5M429.5 176.5H436.5V163.5M378.5 163.5V258.5H456.5V253.5M432.5 197.5V238.5M427 238.5H438M432.5 231.5H456.5V235.5" stroke="#000" stroke-width="1" fill="none"/><rect x="412.5" y="173.5" width="17" height="7" stroke="#000" stroke-width="1" fill="none"/><circle cx="406" cy="197.3" r="8.6" stroke="#000" stroke-width="1.25" fill="none"/><path d="M402.5 192.5V202.5L410 197.5Z" stroke="#000" stroke-width="1" fill="none"/><path d="M410.5 192V203" stroke="#000" stroke-width="1" fill="none"/><path d="M395.8 190.9L390.1 185.2" stroke="#000" stroke-width="1"/><path d="M388.3 183.4L391.1 184.3L389.2 186.2Z" fill="#000"/><path d="M398.8 186.8L393.2 181.6" stroke="#000" stroke-width="1"/><path d="M391.3 179.8L394.1 180.6L392.3 182.5Z" fill="#000"/><rect x="446.5" y="152.5" width="79" height="52" stroke="#000" stroke-width="1" fill="none"/><circle cx="460.3" cy="177.3" r="8.6" stroke="#000" stroke-width="1.25" fill="none"/><path d="M455.5 173.5H465.5L460.5 180.5Z" stroke="#000" stroke-width="1" fill="none"/><path d="M455 180.5H466" stroke="#000" stroke-width="1" fill="none"/><path d="M466.2 166.8L472.3 160.8" stroke="#000" stroke-width="1"/><path d="M474.2 159.0L473.2 161.7L471.4 159.9Z" fill="#000"/><path d="M470.2 169.8L476.3 164.3" stroke="#000" stroke-width="1"/><path d="M478.2 162.6L477.1 165.3L475.4 163.4Z" fill="#000"/><circle cx="506.5" cy="180" r="10.3" stroke="#000" stroke-width="1.25" fill="none"/><path d="M502.5 172V188.5" stroke="#000" stroke-width="1.3"/><path d="M502.5 176.5L511.5 172V166.5H593.5V265.5M502.5 184L511.5 188.5V197.5H569.5M569.5 166.5V173.5M569.5 190.5V227.5M507.5 227.5H579.5M583.5 223L579.5 227.5L583.5 232M588 265.5H599M507.5 258.5H593.5" stroke="#000" stroke-width="1" fill="none"/><path d="M503.5 176L507 172.3L508 175.5Z" fill="#000"/><path d="M487.2 164.0L493.2 170.0" stroke="#000" stroke-width="1"/><path d="M495.0 171.8L492.2 170.9L494.1 169.0Z" fill="#000"/><path d="M490.2 161.0L496.2 167.0" stroke="#000" stroke-width="1"/><path d="M498.0 168.8L495.2 167.9L497.1 166.0Z" fill="#000"/><circle cx="552" cy="166.3" r="8.9" stroke="#000" stroke-width="1.25" fill="none"/><path d="M547.5 161V171.5M555.5 161.5V171.5L547.5 166.5Z" stroke="#000" stroke-width="1" fill="none"/><path d="M559.1 156.9L565.5 150.5" stroke="#000" stroke-width="1"/><path d="M567.3 148.7L566.4 151.5L564.5 149.6Z" fill="#000"/><path d="M562.2 159.9L568.6 153.5" stroke="#000" stroke-width="1"/><path d="M570.4 151.7L569.5 154.5L567.6 152.6Z" fill="#000"/><rect x="566.5" y="173.5" width="6" height="17" stroke="#000" stroke-width="1" fill="none"/><rect x="443.5" y="217.5" width="78" height="51" stroke="#000" stroke-width="1" fill="none"/><circle cx="461.7" cy="244.8" r="10.4" stroke="#000" stroke-width="1.25" fill="none"/><path d="M465.5 237V252.5" stroke="#000" stroke-width="1.3"/><path d="M456.5 235.5L465.5 241M465.5 248.5L456.5 253.5" stroke="#000" stroke-width="1" fill="none"/><path d="M464.5 241.5L460.5 238.3L460 241.5Z" fill="#000"/><path d="M477.7 226.5L472.0 232.1" stroke="#000" stroke-width="1"/><path d="M470.1 233.9L471.1 231.2L472.9 233.0Z" fill="#000"/><path d="M480.9 229.2L475.1 235.0" stroke="#000" stroke-width="1"/><path d="M473.3 236.8L474.2 234.0L476.1 235.9Z" fill="#000"/><circle cx="507.8" cy="242.5" r="8.9" stroke="#000" stroke-width="1.25" fill="none"/><path d="M507.5 227.5V258.5M502.5 238.5H513.5L507.5 245.5ZM502 246.5H514" stroke="#000" stroke-width="1" fill="none"/><path d="M502.0 231.5L496.0 225.5" stroke="#000" stroke-width="1"/><path d="M494.2 223.7L497.0 224.6L495.1 226.5Z" fill="#000"/><path d="M497.7 234.7L491.7 228.7" stroke="#000" stroke-width="1"/><path d="M489.9 226.9L492.7 227.8L490.8 229.7Z" fill="#000"/><text x="347" y="156.3" font-family="Liberation Sans" font-style="italic" font-weight="bold" font-size="6.8" textLength="34.5" lengthAdjust="spacingAndGlyphs" fill="#000">PIN 18  LPT1</text><text x="415.2" y="169.9" font-family="Liberation Sans" font-style="italic" font-size="6.4" textLength="11" lengthAdjust="spacingAndGlyphs" fill="#000">R15</text><text x="400" y="182" font-family="Liberation Sans" font-style="italic" font-size="6.4" textLength="13" lengthAdjust="spacingAndGlyphs" fill="#000">HL15</text><text x="415.2" y="185.6" font-family="Liberation Sans" font-style="italic" font-weight="bold" font-size="5.2" textLength="5.2" lengthAdjust="spacingAndGlyphs" fill="#000">1k</text><text x="545" y="152" font-family="Liberation Sans" font-style="italic" font-size="6.4" textLength="14" lengthAdjust="spacingAndGlyphs" fill="#000">HL16</text><text x="575" y="178.2" font-family="Liberation Sans" font-style="italic" font-size="6.4" textLength="11" lengthAdjust="spacingAndGlyphs" fill="#000">R16</text><text x="575" y="186.8" font-family="Liberation Sans" font-style="italic" font-weight="bold" font-size="5.2" textLength="5.2" lengthAdjust="spacingAndGlyphs" fill="#000">1k</text></g><path d="M484 139h1v2h-1zM484 145h1v2h-1zM484 151h1v2h-1zM484 157h1v2h-1zM484 163h1v2h-1zM484 169h1v2h-1zM484 175h1v2h-1zM484 181h1v2h-1zM484 187h1v2h-1zM484 193h1v2h-1zM484 199h1v2h-1zM484 205h1v2h-1zM484 211h1v2h-1zM484 217h1v2h-1zM484 223h1v2h-1zM484 229h1v2h-1zM484 235h1v2h-1zM484 241h1v2h-1zM484 247h1v2h-1zM484 253h1v2h-1zM484 259h1v2h-1zM484 265h1v2h-1zM484 271h1v2h-1zM484 277h1v2h-1zM484 283h1v2h-1zM484 289h1v2h-1zM484 295h1v2h-1zM484 301h1v2h-1zM484 307h1v2h-1zM484 313h1v2h-1zM484 319h1v2h-1zM484 325h1v2h-1zM484 331h1v2h-1zM484 337h1v2h-1zM484 343h1v2h-1zM484 349h1v2h-1zM484 355h1v2h-1zM484 361h1v2h-1zM484 367h1v2h-1zM484 373h1v2h-1zM484 379h1v2h-1zM484 385h1v2h-1zM484 391h1v2h-1zM484 397h1v2h-1zM484 403h1v2h-1zM484 409h1v2h-1zM484 415h1v2h-1zM484 421h1v2h-1zM484 427h1v2h-1zM484 433h1v2h-1zM484 439h1v2h-1zM484 445h1v2h-1zM484 451h1v2h-1zM484 457h1v2h-1zM484 463h1v2h-1zM484 469h1v2h-1zM484 475h1v2h-1zM484 481h1v2h-1zM484 487h1v2h-1zM484 493h1v2h-1zM484 499h1v2h-1zM484 505h1v2h-1zM484 511h1v2h-1zM484 517h1v2h-1zM484 523h1v2h-1zM484 529h1v2h-1zM484 535h1v2h-1zM484 541h1v2h-1zM484 547h1v2h-1zM484 553h1v2h-1zM484 559h1v2h-1zM484 565h1v2h-1zM484 571h1v2h-1zM484 577h1v2h-1zM484 583h1v2h-1zM484 589h1v2h-1zM484 595h1v2h-1zM484 601h1v2h-1zM484 607h1v2h-1zM484 613h1v2h-1zM484 619h1v2h-1zM484 625h1v2h-1zM484 631h1v2h-1zM484 637h1v2h-1zM484 643h1v2h-1zM484 649h1v2h-1zM484 655h1v2h-1zM484 661h1v2h-1zM484 667h1v2h-1zM484 673h1v2h-1zM484 679h1v2h-1zM484 685h1v2h-1zM484 691h1v2h-1zM484 697h1v2h-1zM484 703h1v2h-1zM484 709h1v2h-1zM484 715h1v2h-1zM484 721h1v2h-1zM484 727h1v2h-1zM484 733h1v2h-1zM484 739h1v2h-1zM484 745h1v2h-1zM484 751h1v2h-1zM484 757h1v2h-1zM484 763h1v2h-1zM484 769h1v2h-1zM788 100h1v2h-1zM788 106h1v2h-1zM788 112h1v2h-1zM788 118h1v2h-1zM788 124h1v2h-1zM788 130h1v2h-1zM788 136h1v2h-1zM788 142h1v2h-1zM788 148h1v2h-1zM788 154h1v2h-1zM788 160h1v2h-1zM788 166h1v2h-1zM788 172h1v2h-1zM788 178h1v2h-1zM788 184h1v2h-1zM788 190h1v2h-1zM788 196h1v2h-1zM788 202h1v2h-1zM788 208h1v2h-1zM788 214h1v2h-1zM788 220h1v2h-1zM788 226h1v2h-1zM788 232h1v2h-1zM788 238h1v2h-1zM788 244h1v2h-1zM788 250h1v2h-1zM788 256h1v2h-1zM788 262h1v2h-1zM788 268h1v2h-1zM788 274h1v2h-1zM788 280h1v2h-1zM788 286h1v2h-1zM788 292h1v2h-1zM788 298h1v2h-1zM788 304h1v2h-1zM788 310h1v2h-1zM788 316h1v2h-1zM788 322h1v2h-1zM788 328h1v2h-1zM788 334h1v2h-1zM788 340h1v2h-1zM788 346h1v2h-1zM788 352h1v2h-1zM788 358h1v2h-1zM788 364h1v2h-1zM788 370h1v2h-1zM788 376h1v2h-1zM788 382h1v2h-1zM788 388h1v2h-1zM788 394h1v2h-1zM788 400h1v2h-1zM788 406h1v2h-1zM788 412h1v2h-1zM788 418h1v2h-1zM788 424h1v2h-1zM788 430h1v2h-1zM788 436h1v2h-1zM788 442h1v2h-1zM788 448h1v2h-1zM788 454h1v2h-1zM788 460h1v2h-1zM788 466h1v2h-1zM788 472h1v2h-1zM788 478h1v2h-1zM788 484h1v2h-1zM788 490h1v2h-1zM788 496h1v2h-1zM788 502h1v2h-1zM788 508h1v2h-1zM788 514h1v2h-1zM788 520h1v2h-1z" fill="#000"/></svg><div class="a" style="left:234px;top:889px;width:1046px;height:19px;background:repeating-conic-gradient(#f8f8fa 0 25%,#eae9ee 0 50%) 0 0/2px 2px"></div><svg style="left:0;top:0" width="1280" height="1024"><path d="M242 888.5L247.5 903.5H325L330.5 888.5" fill="#ebe9ed" stroke="#000" stroke-width="1"/><path d="M234 888.5H242.5M330 888.5H1280" stroke="#000" stroke-width="1.6"/></svg><div class="t" style="left:248px;top:891px;font-size:11px">1: Новый лист</div><div class="a" style="left:0;top:908px;width:1280px;height:1px;background:#a8a8ac"></div><div class="a" style="left:0;top:909px;width:1280px;height:25px;background:#ebe9ed"></div><div class="a" style="left:0px;top:909px;width:52px;height:25px;border-left:1px solid #a0a0a4;border-right:1px solid #fff;border-top:1px solid #f6f6f8"></div><div class="a" style="left:56px;top:909px;width:59px;height:25px;border-left:1px solid #a0a0a4;border-right:1px solid #fff;border-top:1px solid #f6f6f8"></div><div class="a" style="left:118px;top:909px;width:97px;height:25px;border-left:1px solid #a0a0a4;border-right:1px solid #fff;border-top:1px solid #f6f6f8"></div><div class="a" style="left:218px;top:909px;width:175px;height:25px;border-left:1px solid #a0a0a4;border-right:1px solid #fff;border-top:1px solid #f6f6f8"></div><div class="a" style="left:396px;top:909px;width:80px;height:25px;border-left:1px solid #a0a0a4;border-right:1px solid #fff;border-top:1px solid #f6f6f8"></div><div class="a" style="left:480px;top:909px;width:86px;height:25px;border-left:1px solid #a0a0a4;border-right:1px solid #fff;border-top:1px solid #f6f6f8"></div><div class="a" style="left:571px;top:909px;width:709px;height:25px;border-left:1px solid #a0a0a4;border-right:1px solid #fff;border-top:1px solid #f6f6f8"></div><div class="t" style="left:5px;top:910.5px;font-size:11px">X: 159,0</div><div class="t" style="left:5px;top:922px;font-size:11px">Y: 144,0</div><div class="t" style="left:124px;top:910.5px;font-size:11px">Сетка:&nbsp; 1,0 mm</div><div class="t" style="left:124px;top:922px;font-size:11px">Масшт:&nbsp; 1,14</div><div class="t" style="left:574px;top:910.5px;font-size:11px;letter-spacing:0.1px">Указка: Выделение, перемещение, правка, копирование и т.д.</div><div class="t" style="left:574px;top:922px;font-size:11px;letter-spacing:0.2px">&lt;Shift&gt;-отключить привязку к сетке, &lt;Space&gt;-масштаб</div><svg style="left:0;top:0" width="1280" height="1024"><path d="M222.5 914.5H239M222.5 920.5H239M222.5 926.5H239M224 912V929M230.5 912V929M237 912V929" stroke="#000" stroke-width="1.4" fill="none"/><path d="M249 916L252 913.5L257 916L261 920L259 923L255 922Z" fill="none" stroke="#8a1010" stroke-width="2.2"/><rect x="272.5" y="913.5" width="5" height="5" fill="none" stroke="#e03030"/><path d="M276 916H287" stroke="#000" stroke-width="2"/><path d="M274.5 919V926" stroke="#999" stroke-width="2"/><path d="M297.5 912V925.5H310" stroke="#000" fill="none"/><path d="M299 924L309 914" stroke="#000" stroke-dasharray="1 1.5"/><text x="313" y="925" font-family="Liberation Sans" font-size="11">45°</text><path d="M357 916.5A4.5 4.5 0 1 0 356 922" fill="none" stroke="#000" stroke-width="1.3"/><path d="M354 913.5L357.5 916.8L353.5 918Z" fill="#000"/><text x="363" y="925" font-family="Liberation Sans" font-size="11">Нет</text><path d="M401 920.5H444" stroke="#000"/><rect x="453.5" y="912.5" width="17" height="15" fill="none" stroke="#000"/></svg><div class="a" style="left:0;top:934px;width:1280px;height:90px;background:linear-gradient(180deg,#2a50a8 0px,#8ac0f2 1px,#78b0ee 3px,#5a9ae6 7px,#4c8ce0 14px,#3a7ad2 16px,#3a7ad2 76px,#3468c8 82px,#2a4cb0 90px)"></div><div class="a" style="left:0;top:934px;width:97px;height:30px;border-radius:0 13px 13px 0;background:linear-gradient(180deg,#3c8c3c 0px,#a0d0a0 1px,#7cbc7c 3px,#62ac62 10px,#3aa03a 13px,#22a822 16px,#1eae1e 24px,#18a018 27px,#186818 30px);box-shadow:1px 0 1px #2a5aa0"></div><svg style="left:0;top:0" width="1280" height="1024"><g transform="translate(10 939.5) skewY(-6)"><path d="M0.5 1.5q4.5-2 9 0v7q-4.5-2-9 0z" fill="#f06a2a"/><path d="M10.5 1.5q4.5 2 9 0v7q-4.5 2-9 0z" fill="#70c040"/><path d="M0.5 9.5q4.5-2 9 0v7q-4.5-2-9 0z" fill="#4a90e8"/><path d="M10.5 9.5q4.5 2 9 0v7q-4.5 2-9 0z" fill="#f8d038"/></g></svg><svg style="left:0;top:0" width="100" height="1024"><text x="34.5" y="955" font-family="Liberation Sans" font-weight="bold" font-style="italic" font-size="19" textLength="37" lengthAdjust="spacingAndGlyphs" fill="#f4fff4" style="text-shadow:1px 1px 1px #104010">пуск</text></svg><svg style="left:0;top:0" width="1280" height="1024"><path d="M116 941v2" stroke="#202000"/><rect x="112.5" y="943.5" width="7" height="6" fill="#f0e040" stroke="#303000"/><circle cx="116" cy="946.5" r="1.5" fill="none" stroke="#303000"/><rect x="110.5" y="950" width="4" height="5" fill="#f0e040" stroke="#303000"/><rect x="117.5" y="950" width="4" height="5" fill="#f0e040" stroke="#303000"/><rect x="114.5" y="949.5" width="3" height="4" fill="#f0e040" stroke="#303000"/><rect x="131.5" y="941.5" width="14.5" height="12" fill="#100c08"/><rect x="131.5" y="953.5" width="14.5" height="3.5" fill="#506080"/><path d="M133.5 947q5-4 10 0M134 949q4 2 9-1" stroke="#d0a040" stroke-width="1.2" fill="none"/><circle cx="161.6" cy="948.4" r="7" fill="#fff" stroke="#70a040" stroke-width="2"/><path d="M155 946a7 7 0 0 1 6-5" stroke="#a05090" stroke-width="2" fill="none"/><path d="M159.5 945v6.5l5-3.2z" fill="#1a2a90"/><circle cx="116" cy="978.8" r="7" fill="#8cb8f0" stroke="#c0dcff" stroke-width="1.2"/><path d="M112.3 982.5v-6.5h7.5v6.5M116 976v6.5" stroke="#fff" stroke-width="2" fill="none"/><circle cx="138.8" cy="978.8" r="7" fill="#f0a030" stroke="#201008" stroke-width="1.5"/><path d="M135.5 983l3.3-8 3.3 8" stroke="#301008" stroke-width="1.8" fill="none"/><rect x="155.3" y="972.1" width="13.2" height="13.5" fill="#109030" stroke="#b0f0c0"/><path d="M159.5 975v11M159.5 980.5q0 2.5 2 2.5t2.5-2.5M164.5 975v7.5" stroke="#fff" stroke-width="1.8" fill="none"/><path d="M110.5 1016v-8.5l5.5-5.5 5.5 5.5v8.5z" fill="#f4ecd0" stroke="#a08860"/><rect x="112" y="1009" width="3" height="3" fill="#b09050"/><rect x="117" y="1012" width="3" height="3" fill="#d0b040"/><circle cx="120" cy="1004.5" r="4" fill="#3a70c0" stroke="#c0d8f8"/><circle cx="138.8" cy="1008.5" r="7" fill="#d83030" stroke="#f4e0e0" stroke-width="1.5"/><path d="M135.5 1006l3 4 3-4" stroke="#fff" stroke-width="1.2" fill="none"/><rect x="154.8" y="1001.2" width="14.2" height="14.5" fill="#0a1aa0"/><rect x="158.5" y="1001.5" width="6.5" height="4.5" fill="#e0e0f0"/><rect x="156.5" y="1008" width="11" height="2" fill="#fff"/><rect x="156.5" y="1010" width="11" height="2" fill="#d02020"/><rect x="156.5" y="1012" width="11" height="2" fill="#fff"/></svg><div class="a" style="left:183px;top:938px;width:157px;height:24px;border-radius:3px;background:linear-gradient(180deg,#5a9af0,#3c81e8 40%,#3778e0 80%,#2d6ad0);box-shadow:inset 1px 1px 0 #80b8ff;border:1px solid #2a5cc0"></div><div class="t" style="left:212px;top:944.5px;font-size:11px;color:#fff">Total Commander 6.5...</div><div class="a" style="left:343px;top:938px;width:157px;height:24px;border-radius:3px;background:linear-gradient(180deg,#183a8a,#1b3f94 50%,#1f4aa4);box-shadow:inset 1px 1px 2px #0a2a70;border:1px solid #1a3a88"></div><div class="t" style="left:372px;top:944.5px;font-size:11px;color:#fff">sPlan 6.0</div><div class="a" style="left:503px;top:938px;width:157px;height:24px;border-radius:3px;background:linear-gradient(180deg,#5a9af0,#3c81e8 40%,#3778e0 80%,#2d6ad0);box-shadow:inset 1px 1px 0 #80b8ff;border:1px solid #2a5cc0"></div><div class="t" style="left:532px;top:944.5px;font-size:11px;color:#fff">Безымянный - Paint</div><svg style="left:0;top:0" width="1280" height="1024"><circle cx="199.5" cy="949.5" r="7.2" fill="#2a90c8" stroke="#a8d8f0"/><path d="M193 947a7 7 0 0 1 9-5" stroke="#50c050" stroke-width="2.2" fill="none"/><text x="195" y="953.5" font-family="Liberation Sans" font-weight="bold" font-size="9.5" fill="#f0fff0">C</text><path d="M356 943L368 956" stroke="#301808" stroke-width="3"/><path d="M357 944L367 955" stroke="#a04a20" stroke-width="1.2"/><path d="M515 942l2.5 8M519.5 941v9M524 943l-2 7" stroke-width="2.2" stroke="#30a040"/><path d="M515 942l1 3" stroke="#c02828" stroke-width="2.4"/><path d="M524 943l-1 3" stroke="#e070a0" stroke-width="2.4"/><path d="M514.5 947.5h11l-2.5 9h-6z" fill="#f0c030" stroke="#302010" stroke-width="0.8"/><path d="M517 949v6" stroke="#fff6c0" stroke-width="1.2"/></svg><div class="a" style="left:1128px;top:970px;width:17px;height:16px;background:#2f62c8"></div><div class="t" style="left:1129.5px;top:973px;font-size:10.5px;color:#fff">EN</div><div class="a" style="left:1165px;top:934px;width:115px;height:90px;background:linear-gradient(180deg,#8cc0f8 0px,#dce8f8 2px,#d4e2f6 10px,#cfdef6 50%,#c8d8f2 80px,#98b8e8 86px,#5a86d0 90px);border-left:1px solid #6a98e0"></div><svg style="left:0;top:0" width="1280" height="1024"><circle cx="1165.5" cy="980" r="8.5" fill="#c8dcf8" stroke="#f0f8ff" stroke-width="1.5"/><path d="M1167.5 976l-4 4 4 4" stroke="#243a70" stroke-width="1.5" fill="none"/><rect x="1177.5" y="935.5" width="15" height="15" rx="2" fill="#f09030" stroke="#b06010"/><path d="M1182 938.5v9l7-4.5z" fill="#202020"/><circle cx="1185" cy="961" r="7.5" fill="#5a90e0" stroke="#a8c8f0" stroke-width="1.5"/><path d="M1181.5 964v-6h7v6M1185 958v6" stroke="#fff" stroke-width="1.6" fill="none"/><rect x="1177.5" y="972.5" width="15" height="14" fill="#20a040" stroke="#d0f0d0"/><path d="M1182 975v11M1182 980.5q0 2.5 2 2.5t2.5-2.5M1187 975v7.5" stroke="#fff" stroke-width="1.8" fill="none"/><rect x="1177" y="989" width="16" height="16" fill="#800000"/><text x="1178" y="1002.5" font-family="Liberation Sans" font-size="12" textLength="14" lengthAdjust="spacingAndGlyphs" fill="#fff">En</text></svg><div class="t" style="left:1200px;top:955px;width:66px;text-align:center;font-size:11px">9:47</div><div class="t" style="left:1200px;top:973px;width:66px;text-align:center;font-size:11px">среда</div><div class="t" style="left:1200px;top:992px;width:66px;text-align:center;font-size:11px">15.10.2008</div></body></html>
